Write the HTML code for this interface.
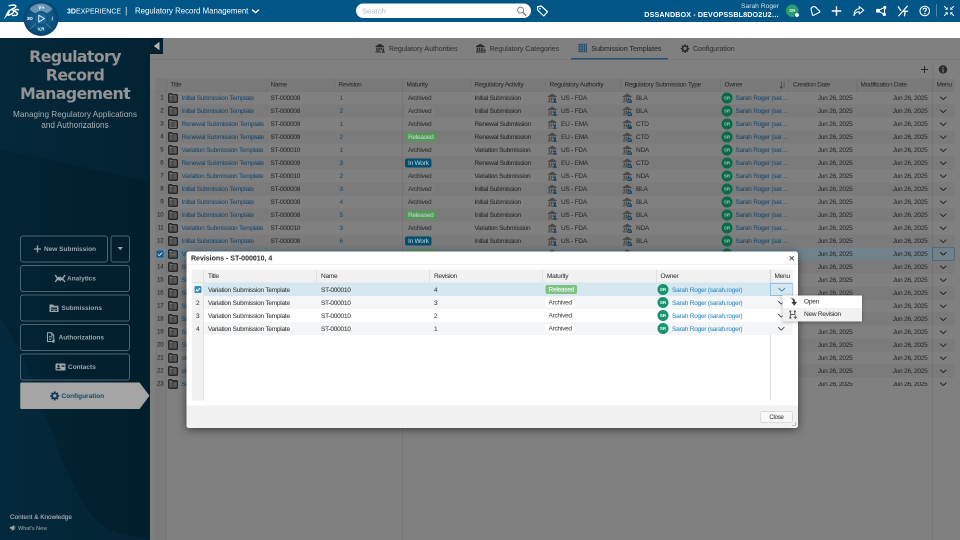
<!DOCTYPE html>
<html lang="en"><head><meta charset="utf-8"><title>Regulatory Record Management</title>
<style>
html,body{margin:0;padding:0}
body{width:960px;height:540px;overflow:hidden;background:#fff}
#root{position:relative;width:1920px;height:1080px;transform:scale(.5);transform-origin:0 0;will-change:transform;filter:blur(.55px);font-family:"Liberation Sans",Arial,sans-serif;color:#2a2a2a;overflow:hidden}
#root svg{position:absolute;display:block}
#topbar{position:absolute;left:0;top:0;width:1920px;height:44px;background:#005686}
#topbar .t{position:absolute;white-space:nowrap;color:#fff}
#strip{position:absolute;left:0;top:44px;width:1920px;height:32px;background:#fff}
/* sidebar */
#side{position:absolute;left:0;top:76px;width:300px;height:1004px;background:#02212f;overflow:hidden}
#side .ttl{position:absolute;left:0;top:19px;width:300px;text-align:center;font:bold 31.800px/36.800px "DejaVu Sans","Liberation Sans",sans-serif;color:#939393;letter-spacing:-1.400px}
#side .sub{position:absolute;left:0;top:142px;width:300px;text-align:center;font:16.400px/20.600px "Liberation Sans",sans-serif;color:#a9afb3}
#side .btn{position:absolute;left:40px;width:216px;height:50px;border:2px solid #4c6472;border-radius:6px;color:#9ea7ad;font:bold 13px "Liberation Sans",sans-serif}
#side .btn span{position:absolute;top:17px;white-space:nowrap}
#side .foot{position:absolute;white-space:nowrap;color:#a4abb0}
/* main */
#main{z-index:0;position:absolute;left:300px;top:76px;width:1620px;height:1004px;background:#808080;overflow:hidden}
.collapse{position:absolute;left:0;top:0;width:26px;height:32px;background:#02212f}
.collapse svg{left:0;top:0;width:26px;height:32px}
.tabs{position:absolute;left:0;top:0;width:1620px;height:44px}
.tab{position:absolute;top:0;height:42px;font-size:14px;color:#383838;white-space:nowrap;-webkit-text-stroke:.15px}
.tab span{position:absolute;top:13px}
.tab .ti{top:8.500px;width:21px;height:21px}
.tabline{position:absolute;left:0;top:42px;width:1620px;height:2px;background:#767676}
.tabul{position:absolute;left:842px;top:40px;width:194px;height:3px;background:#1f5578}
.grid{position:absolute;left:10px;top:0;width:1599px;height:1004px}
.numcol{position:absolute;left:0;top:81px;width:23px;height:923px;background:#7b7b7b}
.vl{position:absolute;top:81px;width:1px;height:923px;background:#6c6c6c;z-index:3}
.hdr{position:absolute;left:0;top:81px;width:1599px;height:25px;background:#7a7a7a;border-bottom:1px solid #6e6e6e}
.h{position:absolute;top:0;height:25px;box-sizing:border-box;border-right:1px solid #6c6c6c;font-size:13px;letter-spacing:-.47px;-webkit-text-stroke:.12px;line-height:24px;padding-left:8px;color:#2e2e2e;white-space:nowrap}
.row{position:absolute;left:0;width:1599px;height:26px;font-size:13px;letter-spacing:-.47px;line-height:25px;-webkit-text-stroke:.12px}
.row.alt{background:#7b7b7b}
.row.sel{background:#71828d}
.c{position:absolute;top:0;height:26px;white-space:nowrap;overflow:hidden}
.c .tx{position:absolute;left:8px;top:0;color:#2b2b2b}
.c.r .tx{left:auto;right:8px}
.c .lnk{position:absolute;top:0;color:#1c4b70;text-decoration:none}
.c.num{left:0;width:17px;text-align:right;padding-right:6px;color:#2b2b2b;font-size:12.500px}
.ic-tpl{left:3px;top:3px;width:20px;height:20px}
.ic-bld{left:3px;top:2px;width:21px;height:21px}
.av{position:absolute;left:2px;top:2px;width:22px;height:22px;border-radius:50%;background:#0b6849;color:#9fc9b8;font:bold 9px/22px "Liberation Sans",sans-serif;letter-spacing:0;-webkit-text-stroke:0;text-align:center}
.chev{left:14px;top:8.500px;width:15px;height:9px}
.bdg{position:absolute;left:5px;top:4px;height:18px;line-height:18px;padding:0 6px;border-radius:4px;font-size:13px}
.b-arch{color:#303030;background:#808080}
.b-rel{background:#54965a;color:#c3d8c4}
.b-work{background:#044f6c;color:#b5cbd6}
.cb{position:absolute;left:3px;top:6px;width:14px;height:14px;background:#1a5d8c;border-radius:2px}
.cb svg{left:0;top:0;width:14px;height:14px}
.c.mn{overflow:visible}
.row.sel .c.mn{box-sizing:border-box;border:1.500px solid #2a597c;background:#71828d}
.row.sel .c.mn .chev{left:12.500px;top:7px}
/* dialog */
#dlg{z-index:10;position:absolute;left:373px;top:503px;width:1223px;height:353px;background:#fff;border-radius:5px;box-shadow:0 3px 18px rgba(0,0,0,.55);font-size:13px;letter-spacing:-.47px;-webkit-text-stroke:.12px;color:#3d3d3d}
#dlg .dt{position:absolute;left:9px;top:4px;font:bold 14px/18px "Liberation Sans",sans-serif;color:#2a2a2a;white-space:nowrap;letter-spacing:0;-webkit-text-stroke:0}
#dlg .dh{position:absolute;left:0;top:25px;width:1223px;height:1px;background:#e2e4e3}
#dlg .gh{position:absolute;left:11px;top:36px;width:1201px;height:25px;background:#f1f1f1;border-bottom:1px solid #d1d4d4}
#dlg .gh div{position:absolute;top:0;height:25px;line-height:25px;box-sizing:border-box;border-right:1px solid #d1d4d4;padding-left:8px;white-space:nowrap;color:#3d3d3d}
#dlg .gn{position:absolute;left:11px;top:62px;width:24px;height:236px;background:#f1f1f1;border-right:1px solid #d1d4d4;box-sizing:border-box}
#dlg .gv{position:absolute;left:1167px;top:36px;width:1px;height:262px;background:#b4b6ba}
#dlg .dr{position:absolute;left:11px;width:1201px;height:26px;line-height:27px}
#dlg .dr .d{position:absolute;top:0;height:26px;white-space:nowrap}
#dlg .dr a{color:#368ec4;text-decoration:none}
#dlg .df{position:absolute;left:0;top:308px;width:1223px;height:45px;background:#f1f1f1;border-radius:0 0 5px 5px}
#dlg .close{position:absolute;left:1148px;top:320px;width:62px;height:20px;border:1px solid #c4c6c8;border-radius:3px;background:#f7f7f7;text-align:center;line-height:20px;font-size:12px;color:#3d3d3d}
#dlg .bdg{top:4px}
#dlg .b-arch{background:#fff;color:#4d4d4d}
#dlg .b-rel{background:#7fc282;color:#fff}
#dlg .av{background:#17946a;color:#fff}
#ctx{z-index:11;position:absolute;left:1565px;top:591px;width:159px;height:52px;background:#fff;box-shadow:0 1px 6px rgba(0,0,0,.35);font-size:13px;letter-spacing:-.47px;-webkit-text-stroke:.12px;color:#3d3d3d}
#ctx div{position:absolute;left:0;width:159px;height:25px;line-height:23px}
#ctx span{position:absolute;left:43px;white-space:nowrap}

</style></head>
<body>
<div id="root">
<div id="topbar">
 <svg viewBox="0 0 32 32" style="left:7px;top:8px;width:32px;height:32px"><g fill="none" stroke="#fff" stroke-linecap="round" stroke-linejoin="round"><path d="M11.500 3.400C15.500 2.200 21 1.600 23.300 2.600c2.200 1 1.400 3.600-1.300 5.300-1.400.9-3 1.600-5 2.100" stroke-width="3"/><path d="M14.500 11.600c4-.4 6.500 1 6 3.600-.6 3-5.500 5.600-11.500 7.300" stroke-width="3"/><path d="M30 11.300c-3.300-.5-6.300-.3-7.400.9-1.200 1.400.2 2.600 2.200 3.700 2.500 1.400 3.800 2.800 2.700 4.800-1.200 2-5 2.600-9.500 2.200" stroke-width="3"/></g><path d="M10 11.800 15 11 10.500 20.500 0.500 30.500l5-10.500z" fill="#fff"/></svg>
 <span class="t" style="left:134px;top:14px;font-size:14px;line-height:16px"><b>3D</b>EXPERIENCE</span>
 <span class="t" style="left:250px;top:10px;font-size:19px;line-height:22px;color:#d5e2ea;font-weight:100">|</span>
 <span class="t" style="left:270px;top:12px;font-size:15.700px;line-height:19px">Regulatory Record Management</span>
 <svg viewBox="0 0 16 10" style="left:503px;top:18px;width:16px;height:10px"><path d="M2 2l6 5.500L14 2" fill="none" stroke="#fff" stroke-width="2.800" stroke-linecap="round" stroke-linejoin="round"/></svg>
 <div style="position:absolute;left:712px;top:7px;width:350px;height:29px;border-radius:15px;background:#fff"></div>
 <span class="t" style="left:724px;top:14px;font-size:15px;line-height:16px;color:#b6babd">Search</span>
 <svg viewBox="0 0 24 24" style="left:1032px;top:11px;width:22px;height:22px"><circle cx="10" cy="10" r="6.500" fill="none" stroke="#777" stroke-width="2"/><path d="M15 15l6.500 6.500" stroke="#6a6a6a" stroke-width="2.600" stroke-linecap="round"/></svg>
 <svg viewBox="0 0 26 26" style="left:1072px;top:9px;width:26px;height:26px"><path d="M3 4.500 10.500 3 23 14.500 15.500 23 3.500 11.500z" fill="none" stroke="#fff" stroke-width="2.400" stroke-linejoin="round"/><circle cx="8" cy="8.500" r="1.600" fill="#fff"/></svg>
 <span class="t" style="right:362px;top:4px;font-size:13.400px;line-height:16px;color:#d3e1ea">Sarah Roger</span>
 <span class="t" style="right:362px;top:21px;font:bold 14.300px/17px 'Liberation Sans',sans-serif;letter-spacing:.26px">DSSANDBOX - DEVOPSSBL8DO2U2…</span>
 <div style="position:absolute;left:1572px;top:9px;width:25px;height:25px;border-radius:50%;background:#2a9d6e;color:#d8f0e6;font:bold 9px/25px 'Liberation Sans',sans-serif;text-align:center">SR</div>
 <div style="position:absolute;left:1589px;top:25px;width:8px;height:8px;border-radius:50%;background:#fff;border:1.500px solid #005686"></div>
 <!-- notification -->
 <svg viewBox="0 0 24 24" style="left:1618px;top:10px;width:24px;height:24px"><path d="M4.300 9.500C3.500 5.500 7 2.600 10.800 3.300c2.600.5 4.400 2.300 5.700 4.700l4.800 4.200c.9.900.6 2-.5 2.500L9.300 20.600c-1.200.6-2.300 0-2.500-1.300z" fill="none" stroke="#fff" stroke-width="2.300" stroke-linejoin="round"/></svg>
 <svg viewBox="0 0 24 24" style="left:1661px;top:10px;width:24px;height:24px"><path d="M12 2.500v19M2.500 12h19" stroke="#fff" stroke-width="2.800"/></svg>
 <svg viewBox="0 0 24 24" style="left:1705px;top:10px;width:24px;height:24px"><path d="M13.500 3 22.500 10.500l-9 7.500v-4.500C8.500 13.500 5 15.500 3 21 3 13 7 8 13.500 7.500z" fill="none" stroke="#fff" stroke-width="2.200" stroke-linejoin="round"/></svg>
 <svg viewBox="0 0 24 24" style="left:1751px;top:10px;width:24px;height:24px"><path d="M4.500 11.500 18.500 4.500 17.800 19z" fill="none" stroke="#fff" stroke-width="2.200"/><circle cx="4.800" cy="11.600" r="4" fill="#fff"/><circle cx="18.600" cy="4.800" r="3" fill="#fff"/><circle cx="17.800" cy="19" r="3.300" fill="#fff"/></svg>
 <svg viewBox="0 0 24 24" style="left:1794px;top:10px;width:24px;height:24px"><path d="M2.500 3.500 7.500 11M20.500 2.500 3.500 21.500M12.500 12.500h9M16.500 12.500 15 21.500" fill="none" stroke="#fff" stroke-width="2.600" stroke-linecap="round"/></svg>
 <svg viewBox="0 0 24 24" style="left:1837px;top:10px;width:24px;height:24px"><circle cx="12.500" cy="12" r="9.500" fill="none" stroke="#fff" stroke-width="2.200"/><path d="M9.200 9.500c0-2 1.400-3.200 3.300-3.200s3.200 1.200 3.200 2.900c0 2.300-3.100 2.500-3.100 4.800" fill="none" stroke="#fff" stroke-width="2.300"/><circle cx="12.600" cy="17.300" r="1.500" fill="#fff"/></svg>
 <div style="position:absolute;left:1872px;top:8px;width:2px;height:25px;background:#4886ab"></div>
 <svg viewBox="0 0 24 24" style="left:1886px;top:10px;width:24px;height:24px"><g fill="#fff" stroke="#fff" stroke-width="2" stroke-linecap="round"><path d="M3 3l5 5M21 3l-5 5M3 21l5-5M21 21l-5-5" fill="none"/><path d="M9.500 4v5.500H4zM14.500 4v5.500H20zM9.500 20v-5.500H4zM14.500 20v-5.500H20z" stroke="none"/></g></svg>
</div>
<div id="strip"></div>
<svg id="compass" viewBox="0 0 72 72" style="left:46px;top:1px;width:72px;height:72px;z-index:5">
 <defs><radialGradient id="cg" cx=".5" cy=".45" r=".55"><stop offset="0" stop-color="#1c6a9b"/><stop offset=".7" stop-color="#0d5482"/><stop offset="1" stop-color="#094772"/></radialGradient></defs>
 <circle cx="36" cy="36" r="35" fill="#0a4670"/>
 <circle cx="36" cy="36" r="31.500" fill="url(#cg)"/>
 <path d="M13.0 16.7A30 30 0 0 1 59.0 16.7Q54.0 23.6 46.1 25.6A14.500 14.500 0 0 0 25.9 25.6Q18.0 23.6 13.0 16.7z" fill="#7fa6c2" opacity=".78"/>
 <path d="M15 57 26.100 45.900M57 57 45.900 45.900" stroke="#5f95b8" stroke-width="1.200"/>
 <circle cx="36" cy="36" r="13" fill="#17649a" stroke="#0b4a76" stroke-width="1.800"/>
 <path d="M31.500 29.500v13.500l11.500-6.800z" fill="none" stroke="#d3e3ef" stroke-width="2.100" stroke-linejoin="round"/>
 <text x="36.500" y="17.500" font-family="Liberation Sans,sans-serif" font-size="10" font-weight="bold" fill="#fff" text-anchor="middle" font-style="italic">V+</text>
 <text x="13.500" y="39" font-family="Liberation Sans,sans-serif" font-size="9.500" font-weight="bold" fill="#fff" text-anchor="middle">3D</text>
 <text x="58.500" y="39.500" font-family="Liberation Sans,sans-serif" font-size="10" font-weight="bold" fill="#fff" text-anchor="middle" font-style="italic">i</text>
 <text x="36" y="59.500" font-family="Liberation Sans,sans-serif" font-size="9" font-weight="bold" fill="#fff" text-anchor="middle">V,R</text>
</svg>

<div id="side">
 <svg viewBox="0 0 300 1004" style="left:0;top:0;width:300px;height:1004px"><defs><linearGradient id="sg" x1="0" y1="0" x2="1" y2="0"><stop offset="0" stop-color="#032536"/><stop offset=".5" stop-color="#022130"/><stop offset="1" stop-color="#011e2c"/></linearGradient></defs><rect width="300" height="1004" fill="url(#sg)"/><path d="M0 0H300V288L0 222z" fill="#0a3349" opacity=".28"/><path d="M0 560C60 640 100 800 150 900S240 990 300 1000V1004H0z" fill="#0b364c" opacity=".3"/></svg>
 <div class="ttl">Regulatory<br>Record<br>Management</div>
 <div class="sub">Managing Regulatory Applications<br>and Authorizations</div>
 <div class="btn" style="top:395px;width:172px">
  <svg viewBox="0 0 16 16" style="left:25px;top:17px;width:16px;height:16px"><path d="M8 1v14M1 8h14" stroke="#9ea7ad" stroke-width="2.600"/></svg>
  <span style="left:46px">New Submission</span></div>
 <div class="btn" style="top:395px;left:221px;width:35px"><svg viewBox="0 0 12 8" style="left:12px;top:21px;width:11px;height:7px"><path d="M0 0h12L6 7.500z" fill="#9ea7ad"/></svg></div>
 <div class="btn" style="top:454px">
  <svg viewBox="0 0 22 18" style="left:67px;top:16px;width:22px;height:18px"><path d="M1.500 2 7.500 11.500l4-5 3.500 4.500 6-9M1.500 16 7.500 7l4 5.500 3.500-4 6 7.500" fill="none" stroke="#9ea7ad" stroke-width="2.700"/></svg>
  <span style="left:92px">Analytics</span></div>
 <div class="btn" style="top:513px">
  <svg viewBox="0 0 20 18" style="left:56px;top:16px;width:20px;height:18px"><path d="M1 2h7l2 2.500h9V17H1z" fill="#9ea7ad"/><path d="M4 8h12v2.500H4zM4 12h12v3H4z" fill="#02212f"/><path d="M7 12.800h6v1.400H7z" fill="#9ea7ad"/></svg>
  <span style="left:81px">Submissions</span></div>
 <div class="btn" style="top:572px">
  <svg viewBox="0 0 18 22" style="left:51px;top:14px;width:18px;height:22px"><path d="M2 1.500h8l4.500 4.500v13H2z" fill="none" stroke="#9ea7ad" stroke-width="2"/><path d="M9.500 2v4.500H14M5 9h6.500M5 12h6.500M5 15h4" fill="none" stroke="#9ea7ad" stroke-width="1.600"/><circle cx="14" cy="17.500" r="2.500" fill="#9ea7ad"/><path d="M12.500 19.500 12 22l2-1 2 1-.5-2.500" fill="#9ea7ad"/></svg>
  <span style="left:75px">Authorizations</span></div>
 <div class="btn" style="top:631px">
  <svg viewBox="0 0 22 16" style="left:68px;top:17px;width:22px;height:16px"><rect x="1" y="1" width="20" height="14" rx="1.500" fill="#9ea7ad"/><circle cx="7" cy="6" r="2.300" fill="#02212f"/><path d="M3 12.500c0-2.500 1.800-3.500 4-3.500s4 1 4 3.500z" fill="#02212f"/><path d="M13 5h6v2.500h-6z" fill="#02212f"/></svg>
  <span style="left:94px">Contacts</span></div>
 <svg viewBox="0 0 260 56" style="left:40px;top:688px;width:260px;height:56px"><path d="M3 1h236l20 26.500L239 54H3a2.500 2.500 0 0 1-2.500-2.500v-48A2.500 2.500 0 0 1 3 1z" fill="#a5a5a5"/></svg>
 <svg viewBox="0 0 24 24" style="left:100px;top:706px;width:19px;height:19px"><path fill="#0d3a5a" fill-rule="evenodd" d="M10.200 1h3.600l.5 3a8 8 0 0 1 2.100.9l2.500-1.800 2.500 2.500-1.800 2.500a8 8 0 0 1 .9 2.100l3 .5v3.600l-3 .5a8 8 0 0 1-.9 2.100l1.800 2.500-2.500 2.500-2.500-1.800a8 8 0 0 1-2.100.9l-.5 3h-3.600l-.5-3a8 8 0 0 1-2.100-.9l-2.500 1.800-2.500-2.500 1.800-2.500a8 8 0 0 1-.9-2.100l-3-.5v-3.600l3-.5a8 8 0 0 1 .9-2.100L2.600 5.600l2.500-2.500 2.500 1.800a8 8 0 0 1 2.100-.9zM12 7.800a4.200 4.200 0 1 0 0 8.400 4.200 4.200 0 0 0 0-8.400z"/></svg>
 <span class="foot" style="left:123px;top:708px;font:bold 13px/16px 'Liberation Sans',sans-serif;color:#16486b">Configuration</span>
 <span class="foot" style="left:20px;top:950px;font-size:12.800px;line-height:16px;color:#b0b7bc;-webkit-text-stroke:.2px">Content &amp; Knowledge</span>
 <svg viewBox="0 0 14 12" style="left:19px;top:974px;width:13px;height:11px"><path d="M1 4.500h3L10 1v9.500L4 7.500H1zM4.500 8l1 3.500h2L6.500 8.500M11 3.500l2-1M11 6h2.500M11 8l2 1" fill="#a4abb0" stroke="#a4abb0" stroke-width=".8"/></svg>
 <span class="foot" style="left:36px;top:973px;font-size:11px;line-height:14px">What's New</span>
</div>

<div id="main">
<div class="collapse"><svg viewBox="0 0 26 32"><path d="M19 7.500v17L7.500 16z" fill="#b4b4b4"/></svg></div>
<div class="tabs">
 <div class="tab" style="left:450px">
  <svg class="ti" viewBox="0 0 22 22" style="left:0"><path d="M1 7.500 10 2.500l9 5V9.300H1z" fill="#2c2c2c"/><path d="M2.500 10.500h3v7h-3zM7 10.500h3v7H7zM11.500 10.500h3v5h-3zM1 18.500h12V21H1z" fill="#2c2c2c"/><path d="M16 10.500h2.500V13H16z" fill="#2c2c2c"/><circle cx="17.300" cy="15.800" r="2.200" fill="#2c2c2c"/><path d="M13.800 21.500c0-2.400 1.500-3.400 3.500-3.400s3.500 1 3.500 3.400z" fill="#2c2c2c"/></svg>
  <span style="left:28px">Regulatory Authorities</span></div>
 <div class="tab" style="left:651px">
  <svg class="ti" viewBox="0 0 22 22" style="left:0"><path d="M1 7.500 10 2.500l9 5V9.300H1z" fill="#2c2c2c"/><path d="M2.500 10.500h3v7h-3zM7 10.500h3v7H7zM11.500 10.500h3v3h-3zM16 10.500h2.500v2H16zM1 18.500h9V21H1z" fill="#2c2c2c"/><path d="M11 14.500h4.500v3H11zM16.500 14.500H21v3h-4.500zM11 18.500h4.500v3H11zM16.500 18.500H21v3h-4.500z" fill="#2c2c2c"/></svg>
  <span style="left:28px">Regulatory Categories</span></div>
 <div class="tab act" style="left:855px">
  <svg class="ti" viewBox="0 0 22 22" style="left:1px;top:10px;width:19px;height:20px"><path d="M2.500 1v20M6.800 1v20M11 1v20M15.200 1v20M19.500 1v20" stroke="#1d4868" stroke-width="2.100"/><path d="M1.500 3h19M1.500 8.300h19M1.500 13.700h19M1.500 19h19" stroke="#1d4868" stroke-width="1.300" opacity=".75"/></svg>
  <span style="left:28px;color:#2b2b2b">Submission Templates</span></div>
 <div class="tab" style="left:1060px">
  <svg class="ti" viewBox="0 0 24 24" style="left:1px;top:11.500px;width:18px;height:18px"><path fill="#2e2e2e" fill-rule="evenodd" d="M10.200 1h3.600l.5 3a8 8 0 0 1 2.100.9l2.500-1.800 2.500 2.500-1.800 2.500a8 8 0 0 1 .9 2.100l3 .5v3.600l-3 .5a8 8 0 0 1-.9 2.100l1.800 2.500-2.500 2.500-2.500-1.800a8 8 0 0 1-2.100.9l-.5 3h-3.600l-.5-3a8 8 0 0 1-2.100-.9l-2.500 1.800-2.500-2.500 1.800-2.500a8 8 0 0 1-.9-2.100l-3-.5v-3.600l3-.5a8 8 0 0 1 .9-2.100L2.600 5.600l2.500-2.500 2.500 1.800a8 8 0 0 1 2.100-.9zM12 7.800a4.200 4.200 0 1 0 0 8.400 4.200 4.200 0 0 0 0-8.400z"/></svg>
  <span style="left:26px">Configuration</span></div>
 <div class="tabline"></div>
 <div class="tabul"></div>
</div>
<div class="tool">
 <svg viewBox="0 0 20 20" style="left:1539px;top:53px;width:20px;height:20px"><path d="M10 3v14M3 10h14" stroke="#2a2a2a" stroke-width="2"/></svg>
 <div style="position:absolute;left:1565px;top:49px;width:2px;height:28px;background:#757575"></div>
 <svg viewBox="0 0 20 20" style="left:1576px;top:53px;width:20px;height:20px"><circle cx="10" cy="10" r="8.500" fill="#2a2a2a"/><path d="M8.200 8.600h2.900v5.600h1.100v1.300H8v-1.300h1.200v-4.300h-1zM8.900 4.700h2.200v2.200H8.900z" fill="#858585"/></svg>
</div>
<div class="grid">
 <div class="numcol"></div>
 <div class="vl" style="left:22px"></div>
 <div class="vl" style="left:494px"></div>
 <div class="vl" style="left:1554px"></div>
 <div class="hdr">
  <div class="h" style="left:0;width:23px"></div>
  <div class="h" style="left:23px;width:200px">Title</div>
  <div class="h" style="left:223px;width:136px">Name</div>
  <div class="h" style="left:359px;width:136px">Revision</div>
  <div class="h" style="left:495px;width:136px">Maturity</div>
  <div class="h" style="left:631px;width:150px">Regulatory Activity</div>
  <div class="h" style="left:781px;width:150px">Regulatory Authority</div>
  <div class="h" style="left:931px;width:200px">Regulatory Submission Type</div>
  <div class="h" style="left:1131px;width:137px">Owner<svg viewBox="0 0 12 16" style="position:absolute;right:6px;top:5px;width:12px;height:16px"><path d="M3.500 1v13M1 11.500 3.500 14.500 6 11.500" stroke="#333" stroke-width="1.300" fill="none"/><path d="M8 2h3M8 5h3M8 8.500h3M8 12h3" stroke="#333" stroke-width="1.200"/></svg></div>
  <div class="h" style="left:1268px;width:135px">Creation Date</div>
  <div class="h" style="left:1403px;width:152px">Modification Date</div>
  <div class="h" style="left:1555px;width:44px;border-right:0">Menu</div>
 </div>
<div class="row" style="top:107px">
<div class="c num">1</div>
<div class="c" style="left:23px;width:200px"><svg class="ic-tpl" viewBox="0 0 20 20"><path d="M1.600 5V3.200c0-1 .6-1.600 1.600-1.600h3.600l1.600 1.900h8.400c1 0 1.600.6 1.600 1.600v11.700c0 1-.6 1.600-1.600 1.600H3.200c-1 0-1.600-.6-1.600-1.600z" fill="none" stroke="#1c1c1c" stroke-width="2.700"/><path d="M5.800 6.800h8.400v8.800H5.800z" fill="#8a8a8a" stroke="#2c2c2c" stroke-width="1.300"/><path d="M7.200 9.300h5.600M7.200 11.400h5.600M7.200 13.500h5.600" stroke="#222" stroke-width="1.300" fill="none"/></svg><a class="lnk" style="left:30px">Initial Submission Template</a></div>
<div class="c" style="left:223px;width:136px"><span class="tx">ST-000008</span></div>
<div class="c" style="left:359px;width:136px"><a class="lnk" style="left:10px">1</a></div>
<div class="c" style="left:495px;width:136px"><span class="bdg b-arch">Archived</span></div>
<div class="c" style="left:631px;width:150px"><span class="tx">Initial Submission</span></div>
<div class="c" style="left:781px;width:150px"><svg class="ic-bld" viewBox="0 0 22 22"><path d="M1.500 8 11 2l9.500 6v1.500h-19z" fill="#4a4a4a"/><path d="M3.500 10.500h2.600v7H3.500zM7.800 10.500h2.600v7H7.800zM12 10.500h2.600v5H12zM16.200 10.500h2.400v3.500h-2.400zM1.500 18.500h11v2.300h-11z" fill="#4a4a4a"/><circle cx="16.500" cy="15.300" r="2.300" fill="#0f3d5e"/><path d="M12.500 21.500c0-2.600 1.700-3.800 4-3.800s4 1.200 4 3.800z" fill="#0f3d5e"/></svg><span class="tx" style="left:31px">US - FDA</span></div>
<div class="c" style="left:931px;width:200px"><svg class="ic-bld" viewBox="0 0 22 22"><path d="M1.500 8 11 2l9.500 6v1.500h-19z" fill="#4a4a4a"/><path d="M3.500 10.500h2.600v7H3.500zM7.800 10.500h2.600v7H7.800zM12 10.500h2.600v3H12zM16.200 10.500h2.400v2h-2.400zM1.500 18.500h9v2.300h-9z" fill="#4a4a4a"/><path d="M11.500 14h6.200l3 3v4.700h-9.200z" fill="#0f3d5e"/><path d="M13.200 17.200h4.500M13.200 19.300h5.500" stroke="#8a9aa6" stroke-width="1"/></svg><span class="tx" style="left:31px">BLA</span></div>
<div class="c" style="left:1131px;width:137px"><span class="av">SR</span><a class="lnk" style="left:30px">Sarah Roger (sar…</a></div>
<div class="c r" style="left:1268px;width:135px"><span class="tx">Jun 26, 2025</span></div>
<div class="c r" style="left:1403px;width:152px"><span class="tx" style="right:10px">Jun 26, 2025</span></div>
<div class="c mn" style="left:1555px;width:44px"><svg class="chev" viewBox="0 0 20 12"><path d="M2.500 2.500 10 9.500l7.500-7" fill="none" stroke="#222" stroke-width="2.700" stroke-linecap="round" stroke-linejoin="round"/></svg></div>
</div>
<div class="row alt" style="top:133px">
<div class="c num">2</div>
<div class="c" style="left:23px;width:200px"><svg class="ic-tpl" viewBox="0 0 20 20"><path d="M1.600 5V3.200c0-1 .6-1.600 1.600-1.600h3.600l1.600 1.900h8.400c1 0 1.600.6 1.600 1.600v11.700c0 1-.6 1.600-1.600 1.600H3.200c-1 0-1.600-.6-1.600-1.600z" fill="none" stroke="#1c1c1c" stroke-width="2.700"/><path d="M5.800 6.800h8.400v8.800H5.800z" fill="#8a8a8a" stroke="#2c2c2c" stroke-width="1.300"/><path d="M7.200 9.300h5.600M7.200 11.400h5.600M7.200 13.500h5.600" stroke="#222" stroke-width="1.300" fill="none"/></svg><a class="lnk" style="left:30px">Initial Submission Template</a></div>
<div class="c" style="left:223px;width:136px"><span class="tx">ST-000008</span></div>
<div class="c" style="left:359px;width:136px"><a class="lnk" style="left:10px">2</a></div>
<div class="c" style="left:495px;width:136px"><span class="bdg b-arch">Archived</span></div>
<div class="c" style="left:631px;width:150px"><span class="tx">Initial Submission</span></div>
<div class="c" style="left:781px;width:150px"><svg class="ic-bld" viewBox="0 0 22 22"><path d="M1.500 8 11 2l9.500 6v1.500h-19z" fill="#4a4a4a"/><path d="M3.500 10.500h2.600v7H3.500zM7.800 10.500h2.600v7H7.800zM12 10.500h2.600v5H12zM16.200 10.500h2.400v3.500h-2.400zM1.500 18.500h11v2.300h-11z" fill="#4a4a4a"/><circle cx="16.500" cy="15.300" r="2.300" fill="#0f3d5e"/><path d="M12.500 21.500c0-2.600 1.700-3.800 4-3.800s4 1.200 4 3.800z" fill="#0f3d5e"/></svg><span class="tx" style="left:31px">US - FDA</span></div>
<div class="c" style="left:931px;width:200px"><svg class="ic-bld" viewBox="0 0 22 22"><path d="M1.500 8 11 2l9.500 6v1.500h-19z" fill="#4a4a4a"/><path d="M3.500 10.500h2.600v7H3.500zM7.800 10.500h2.600v7H7.800zM12 10.500h2.600v3H12zM16.200 10.500h2.400v2h-2.400zM1.500 18.500h9v2.300h-9z" fill="#4a4a4a"/><path d="M11.500 14h6.200l3 3v4.700h-9.200z" fill="#0f3d5e"/><path d="M13.200 17.200h4.500M13.200 19.300h5.500" stroke="#8a9aa6" stroke-width="1"/></svg><span class="tx" style="left:31px">BLA</span></div>
<div class="c" style="left:1131px;width:137px"><span class="av">SR</span><a class="lnk" style="left:30px">Sarah Roger (sar…</a></div>
<div class="c r" style="left:1268px;width:135px"><span class="tx">Jun 26, 2025</span></div>
<div class="c r" style="left:1403px;width:152px"><span class="tx" style="right:10px">Jun 26, 2025</span></div>
<div class="c mn" style="left:1555px;width:44px"><svg class="chev" viewBox="0 0 20 12"><path d="M2.500 2.500 10 9.500l7.500-7" fill="none" stroke="#222" stroke-width="2.700" stroke-linecap="round" stroke-linejoin="round"/></svg></div>
</div>
<div class="row" style="top:159px">
<div class="c num">3</div>
<div class="c" style="left:23px;width:200px"><svg class="ic-tpl" viewBox="0 0 20 20"><path d="M1.600 5V3.200c0-1 .6-1.600 1.600-1.600h3.600l1.600 1.900h8.400c1 0 1.600.6 1.600 1.600v11.700c0 1-.6 1.600-1.600 1.600H3.200c-1 0-1.600-.6-1.600-1.600z" fill="none" stroke="#1c1c1c" stroke-width="2.700"/><path d="M5.800 6.800h8.400v8.800H5.800z" fill="#8a8a8a" stroke="#2c2c2c" stroke-width="1.300"/><path d="M7.200 9.300h5.600M7.200 11.400h5.600M7.200 13.500h5.600" stroke="#222" stroke-width="1.300" fill="none"/></svg><a class="lnk" style="left:30px">Renewal Submission Template</a></div>
<div class="c" style="left:223px;width:136px"><span class="tx">ST-000009</span></div>
<div class="c" style="left:359px;width:136px"><a class="lnk" style="left:10px">1</a></div>
<div class="c" style="left:495px;width:136px"><span class="bdg b-arch">Archived</span></div>
<div class="c" style="left:631px;width:150px"><span class="tx">Renewal Submission</span></div>
<div class="c" style="left:781px;width:150px"><svg class="ic-bld" viewBox="0 0 22 22"><path d="M1.500 8 11 2l9.500 6v1.500h-19z" fill="#4a4a4a"/><path d="M3.500 10.500h2.600v7H3.500zM7.800 10.500h2.600v7H7.800zM12 10.500h2.600v5H12zM16.200 10.500h2.400v3.500h-2.400zM1.500 18.500h11v2.300h-11z" fill="#4a4a4a"/><circle cx="16.500" cy="15.300" r="2.300" fill="#0f3d5e"/><path d="M12.500 21.500c0-2.600 1.700-3.800 4-3.800s4 1.200 4 3.800z" fill="#0f3d5e"/></svg><span class="tx" style="left:31px">EU - EMA</span></div>
<div class="c" style="left:931px;width:200px"><svg class="ic-bld" viewBox="0 0 22 22"><path d="M1.500 8 11 2l9.500 6v1.500h-19z" fill="#4a4a4a"/><path d="M3.500 10.500h2.600v7H3.500zM7.800 10.500h2.600v7H7.800zM12 10.500h2.600v3H12zM16.200 10.500h2.400v2h-2.400zM1.500 18.500h9v2.300h-9z" fill="#4a4a4a"/><path d="M11.500 14h6.200l3 3v4.700h-9.200z" fill="#0f3d5e"/><path d="M13.200 17.200h4.500M13.200 19.300h5.500" stroke="#8a9aa6" stroke-width="1"/></svg><span class="tx" style="left:31px">CTD</span></div>
<div class="c" style="left:1131px;width:137px"><span class="av">SR</span><a class="lnk" style="left:30px">Sarah Roger (sar…</a></div>
<div class="c r" style="left:1268px;width:135px"><span class="tx">Jun 26, 2025</span></div>
<div class="c r" style="left:1403px;width:152px"><span class="tx" style="right:10px">Jun 26, 2025</span></div>
<div class="c mn" style="left:1555px;width:44px"><svg class="chev" viewBox="0 0 20 12"><path d="M2.500 2.500 10 9.500l7.500-7" fill="none" stroke="#222" stroke-width="2.700" stroke-linecap="round" stroke-linejoin="round"/></svg></div>
</div>
<div class="row alt" style="top:185px">
<div class="c num">4</div>
<div class="c" style="left:23px;width:200px"><svg class="ic-tpl" viewBox="0 0 20 20"><path d="M1.600 5V3.200c0-1 .6-1.600 1.600-1.600h3.600l1.600 1.900h8.400c1 0 1.600.6 1.600 1.600v11.700c0 1-.6 1.600-1.600 1.600H3.200c-1 0-1.600-.6-1.600-1.600z" fill="none" stroke="#1c1c1c" stroke-width="2.700"/><path d="M5.800 6.800h8.400v8.800H5.800z" fill="#8a8a8a" stroke="#2c2c2c" stroke-width="1.300"/><path d="M7.200 9.300h5.600M7.200 11.400h5.600M7.200 13.500h5.600" stroke="#222" stroke-width="1.300" fill="none"/></svg><a class="lnk" style="left:30px">Renewal Submission Template</a></div>
<div class="c" style="left:223px;width:136px"><span class="tx">ST-000009</span></div>
<div class="c" style="left:359px;width:136px"><a class="lnk" style="left:10px">2</a></div>
<div class="c" style="left:495px;width:136px"><span class="bdg b-rel">Released</span></div>
<div class="c" style="left:631px;width:150px"><span class="tx">Renewal Submission</span></div>
<div class="c" style="left:781px;width:150px"><svg class="ic-bld" viewBox="0 0 22 22"><path d="M1.500 8 11 2l9.500 6v1.500h-19z" fill="#4a4a4a"/><path d="M3.500 10.500h2.600v7H3.500zM7.800 10.500h2.600v7H7.800zM12 10.500h2.600v5H12zM16.200 10.500h2.400v3.500h-2.400zM1.500 18.500h11v2.300h-11z" fill="#4a4a4a"/><circle cx="16.500" cy="15.300" r="2.300" fill="#0f3d5e"/><path d="M12.500 21.500c0-2.600 1.700-3.800 4-3.800s4 1.200 4 3.800z" fill="#0f3d5e"/></svg><span class="tx" style="left:31px">EU - EMA</span></div>
<div class="c" style="left:931px;width:200px"><svg class="ic-bld" viewBox="0 0 22 22"><path d="M1.500 8 11 2l9.500 6v1.500h-19z" fill="#4a4a4a"/><path d="M3.500 10.500h2.600v7H3.500zM7.800 10.500h2.600v7H7.800zM12 10.500h2.600v3H12zM16.200 10.500h2.400v2h-2.400zM1.500 18.500h9v2.300h-9z" fill="#4a4a4a"/><path d="M11.500 14h6.200l3 3v4.700h-9.200z" fill="#0f3d5e"/><path d="M13.200 17.200h4.500M13.200 19.300h5.500" stroke="#8a9aa6" stroke-width="1"/></svg><span class="tx" style="left:31px">CTD</span></div>
<div class="c" style="left:1131px;width:137px"><span class="av">SR</span><a class="lnk" style="left:30px">Sarah Roger (sar…</a></div>
<div class="c r" style="left:1268px;width:135px"><span class="tx">Jun 26, 2025</span></div>
<div class="c r" style="left:1403px;width:152px"><span class="tx" style="right:10px">Jun 26, 2025</span></div>
<div class="c mn" style="left:1555px;width:44px"><svg class="chev" viewBox="0 0 20 12"><path d="M2.500 2.500 10 9.500l7.500-7" fill="none" stroke="#222" stroke-width="2.700" stroke-linecap="round" stroke-linejoin="round"/></svg></div>
</div>
<div class="row" style="top:211px">
<div class="c num">5</div>
<div class="c" style="left:23px;width:200px"><svg class="ic-tpl" viewBox="0 0 20 20"><path d="M1.600 5V3.200c0-1 .6-1.600 1.600-1.600h3.600l1.600 1.900h8.400c1 0 1.600.6 1.600 1.600v11.700c0 1-.6 1.600-1.600 1.600H3.200c-1 0-1.600-.6-1.600-1.600z" fill="none" stroke="#1c1c1c" stroke-width="2.700"/><path d="M5.800 6.800h8.400v8.800H5.800z" fill="#8a8a8a" stroke="#2c2c2c" stroke-width="1.300"/><path d="M7.200 9.300h5.600M7.200 11.400h5.600M7.200 13.500h5.600" stroke="#222" stroke-width="1.300" fill="none"/></svg><a class="lnk" style="left:30px">Variation Submission Template</a></div>
<div class="c" style="left:223px;width:136px"><span class="tx">ST-000010</span></div>
<div class="c" style="left:359px;width:136px"><a class="lnk" style="left:10px">1</a></div>
<div class="c" style="left:495px;width:136px"><span class="bdg b-arch">Archived</span></div>
<div class="c" style="left:631px;width:150px"><span class="tx">Variation Submission</span></div>
<div class="c" style="left:781px;width:150px"><svg class="ic-bld" viewBox="0 0 22 22"><path d="M1.500 8 11 2l9.500 6v1.500h-19z" fill="#4a4a4a"/><path d="M3.500 10.500h2.600v7H3.500zM7.800 10.500h2.600v7H7.800zM12 10.500h2.600v5H12zM16.200 10.500h2.400v3.500h-2.400zM1.500 18.500h11v2.300h-11z" fill="#4a4a4a"/><circle cx="16.500" cy="15.300" r="2.300" fill="#0f3d5e"/><path d="M12.500 21.500c0-2.600 1.700-3.800 4-3.800s4 1.200 4 3.800z" fill="#0f3d5e"/></svg><span class="tx" style="left:31px">US - FDA</span></div>
<div class="c" style="left:931px;width:200px"><svg class="ic-bld" viewBox="0 0 22 22"><path d="M1.500 8 11 2l9.500 6v1.500h-19z" fill="#4a4a4a"/><path d="M3.500 10.500h2.600v7H3.500zM7.800 10.500h2.600v7H7.800zM12 10.500h2.600v3H12zM16.200 10.500h2.400v2h-2.400zM1.500 18.500h9v2.300h-9z" fill="#4a4a4a"/><path d="M11.500 14h6.200l3 3v4.700h-9.200z" fill="#0f3d5e"/><path d="M13.200 17.200h4.500M13.200 19.300h5.500" stroke="#8a9aa6" stroke-width="1"/></svg><span class="tx" style="left:31px">NDA</span></div>
<div class="c" style="left:1131px;width:137px"><span class="av">SR</span><a class="lnk" style="left:30px">Sarah Roger (sar…</a></div>
<div class="c r" style="left:1268px;width:135px"><span class="tx">Jun 26, 2025</span></div>
<div class="c r" style="left:1403px;width:152px"><span class="tx" style="right:10px">Jun 26, 2025</span></div>
<div class="c mn" style="left:1555px;width:44px"><svg class="chev" viewBox="0 0 20 12"><path d="M2.500 2.500 10 9.500l7.500-7" fill="none" stroke="#222" stroke-width="2.700" stroke-linecap="round" stroke-linejoin="round"/></svg></div>
</div>
<div class="row alt" style="top:237px">
<div class="c num">6</div>
<div class="c" style="left:23px;width:200px"><svg class="ic-tpl" viewBox="0 0 20 20"><path d="M1.600 5V3.200c0-1 .6-1.600 1.600-1.600h3.600l1.600 1.900h8.400c1 0 1.600.6 1.600 1.600v11.700c0 1-.6 1.600-1.600 1.600H3.200c-1 0-1.600-.6-1.600-1.600z" fill="none" stroke="#1c1c1c" stroke-width="2.700"/><path d="M5.800 6.800h8.400v8.800H5.800z" fill="#8a8a8a" stroke="#2c2c2c" stroke-width="1.300"/><path d="M7.200 9.300h5.600M7.200 11.400h5.600M7.200 13.500h5.600" stroke="#222" stroke-width="1.300" fill="none"/></svg><a class="lnk" style="left:30px">Renewal Submission Template</a></div>
<div class="c" style="left:223px;width:136px"><span class="tx">ST-000009</span></div>
<div class="c" style="left:359px;width:136px"><a class="lnk" style="left:10px">3</a></div>
<div class="c" style="left:495px;width:136px"><span class="bdg b-work">In Work</span></div>
<div class="c" style="left:631px;width:150px"><span class="tx">Renewal Submission</span></div>
<div class="c" style="left:781px;width:150px"><svg class="ic-bld" viewBox="0 0 22 22"><path d="M1.500 8 11 2l9.500 6v1.500h-19z" fill="#4a4a4a"/><path d="M3.500 10.500h2.600v7H3.500zM7.800 10.500h2.600v7H7.800zM12 10.500h2.600v5H12zM16.200 10.500h2.400v3.500h-2.400zM1.500 18.500h11v2.300h-11z" fill="#4a4a4a"/><circle cx="16.500" cy="15.300" r="2.300" fill="#0f3d5e"/><path d="M12.500 21.500c0-2.600 1.700-3.800 4-3.800s4 1.200 4 3.800z" fill="#0f3d5e"/></svg><span class="tx" style="left:31px">EU - EMA</span></div>
<div class="c" style="left:931px;width:200px"><svg class="ic-bld" viewBox="0 0 22 22"><path d="M1.500 8 11 2l9.500 6v1.500h-19z" fill="#4a4a4a"/><path d="M3.500 10.500h2.600v7H3.500zM7.800 10.500h2.600v7H7.800zM12 10.500h2.600v3H12zM16.200 10.500h2.400v2h-2.400zM1.500 18.500h9v2.300h-9z" fill="#4a4a4a"/><path d="M11.500 14h6.200l3 3v4.700h-9.200z" fill="#0f3d5e"/><path d="M13.200 17.200h4.500M13.200 19.300h5.500" stroke="#8a9aa6" stroke-width="1"/></svg><span class="tx" style="left:31px">CTD</span></div>
<div class="c" style="left:1131px;width:137px"><span class="av">SR</span><a class="lnk" style="left:30px">Sarah Roger (sar…</a></div>
<div class="c r" style="left:1268px;width:135px"><span class="tx">Jun 26, 2025</span></div>
<div class="c r" style="left:1403px;width:152px"><span class="tx" style="right:10px">Jun 26, 2025</span></div>
<div class="c mn" style="left:1555px;width:44px"><svg class="chev" viewBox="0 0 20 12"><path d="M2.500 2.500 10 9.500l7.500-7" fill="none" stroke="#222" stroke-width="2.700" stroke-linecap="round" stroke-linejoin="round"/></svg></div>
</div>
<div class="row" style="top:263px">
<div class="c num">7</div>
<div class="c" style="left:23px;width:200px"><svg class="ic-tpl" viewBox="0 0 20 20"><path d="M1.600 5V3.200c0-1 .6-1.600 1.600-1.600h3.600l1.600 1.900h8.400c1 0 1.600.6 1.600 1.600v11.700c0 1-.6 1.600-1.600 1.600H3.200c-1 0-1.600-.6-1.600-1.600z" fill="none" stroke="#1c1c1c" stroke-width="2.700"/><path d="M5.800 6.800h8.400v8.800H5.800z" fill="#8a8a8a" stroke="#2c2c2c" stroke-width="1.300"/><path d="M7.200 9.300h5.600M7.200 11.400h5.600M7.200 13.500h5.600" stroke="#222" stroke-width="1.300" fill="none"/></svg><a class="lnk" style="left:30px">Variation Submission Template</a></div>
<div class="c" style="left:223px;width:136px"><span class="tx">ST-000010</span></div>
<div class="c" style="left:359px;width:136px"><a class="lnk" style="left:10px">2</a></div>
<div class="c" style="left:495px;width:136px"><span class="bdg b-arch">Archived</span></div>
<div class="c" style="left:631px;width:150px"><span class="tx">Variation Submission</span></div>
<div class="c" style="left:781px;width:150px"><svg class="ic-bld" viewBox="0 0 22 22"><path d="M1.500 8 11 2l9.500 6v1.500h-19z" fill="#4a4a4a"/><path d="M3.500 10.500h2.600v7H3.500zM7.800 10.500h2.600v7H7.800zM12 10.500h2.600v5H12zM16.200 10.500h2.400v3.500h-2.400zM1.500 18.500h11v2.300h-11z" fill="#4a4a4a"/><circle cx="16.500" cy="15.300" r="2.300" fill="#0f3d5e"/><path d="M12.500 21.500c0-2.600 1.700-3.800 4-3.800s4 1.200 4 3.800z" fill="#0f3d5e"/></svg><span class="tx" style="left:31px">US - FDA</span></div>
<div class="c" style="left:931px;width:200px"><svg class="ic-bld" viewBox="0 0 22 22"><path d="M1.500 8 11 2l9.500 6v1.500h-19z" fill="#4a4a4a"/><path d="M3.500 10.500h2.600v7H3.500zM7.800 10.500h2.600v7H7.800zM12 10.500h2.600v3H12zM16.200 10.500h2.400v2h-2.400zM1.500 18.500h9v2.300h-9z" fill="#4a4a4a"/><path d="M11.500 14h6.200l3 3v4.700h-9.200z" fill="#0f3d5e"/><path d="M13.200 17.200h4.500M13.200 19.300h5.500" stroke="#8a9aa6" stroke-width="1"/></svg><span class="tx" style="left:31px">NDA</span></div>
<div class="c" style="left:1131px;width:137px"><span class="av">SR</span><a class="lnk" style="left:30px">Sarah Roger (sar…</a></div>
<div class="c r" style="left:1268px;width:135px"><span class="tx">Jun 26, 2025</span></div>
<div class="c r" style="left:1403px;width:152px"><span class="tx" style="right:10px">Jun 26, 2025</span></div>
<div class="c mn" style="left:1555px;width:44px"><svg class="chev" viewBox="0 0 20 12"><path d="M2.500 2.500 10 9.500l7.500-7" fill="none" stroke="#222" stroke-width="2.700" stroke-linecap="round" stroke-linejoin="round"/></svg></div>
</div>
<div class="row alt" style="top:289px">
<div class="c num">8</div>
<div class="c" style="left:23px;width:200px"><svg class="ic-tpl" viewBox="0 0 20 20"><path d="M1.600 5V3.200c0-1 .6-1.600 1.600-1.600h3.600l1.600 1.900h8.400c1 0 1.600.6 1.600 1.600v11.700c0 1-.6 1.600-1.600 1.600H3.200c-1 0-1.600-.6-1.600-1.600z" fill="none" stroke="#1c1c1c" stroke-width="2.700"/><path d="M5.800 6.800h8.400v8.800H5.800z" fill="#8a8a8a" stroke="#2c2c2c" stroke-width="1.300"/><path d="M7.200 9.300h5.600M7.200 11.400h5.600M7.200 13.500h5.600" stroke="#222" stroke-width="1.300" fill="none"/></svg><a class="lnk" style="left:30px">Initial Submission Template</a></div>
<div class="c" style="left:223px;width:136px"><span class="tx">ST-000008</span></div>
<div class="c" style="left:359px;width:136px"><a class="lnk" style="left:10px">3</a></div>
<div class="c" style="left:495px;width:136px"><span class="bdg b-arch">Archived</span></div>
<div class="c" style="left:631px;width:150px"><span class="tx">Initial Submission</span></div>
<div class="c" style="left:781px;width:150px"><svg class="ic-bld" viewBox="0 0 22 22"><path d="M1.500 8 11 2l9.500 6v1.500h-19z" fill="#4a4a4a"/><path d="M3.500 10.500h2.600v7H3.500zM7.800 10.500h2.600v7H7.800zM12 10.500h2.600v5H12zM16.200 10.500h2.400v3.500h-2.400zM1.500 18.500h11v2.300h-11z" fill="#4a4a4a"/><circle cx="16.500" cy="15.300" r="2.300" fill="#0f3d5e"/><path d="M12.500 21.500c0-2.600 1.700-3.800 4-3.800s4 1.200 4 3.800z" fill="#0f3d5e"/></svg><span class="tx" style="left:31px">US - FDA</span></div>
<div class="c" style="left:931px;width:200px"><svg class="ic-bld" viewBox="0 0 22 22"><path d="M1.500 8 11 2l9.500 6v1.500h-19z" fill="#4a4a4a"/><path d="M3.500 10.500h2.600v7H3.500zM7.800 10.500h2.600v7H7.800zM12 10.500h2.600v3H12zM16.200 10.500h2.400v2h-2.400zM1.500 18.500h9v2.300h-9z" fill="#4a4a4a"/><path d="M11.500 14h6.200l3 3v4.700h-9.200z" fill="#0f3d5e"/><path d="M13.200 17.200h4.500M13.200 19.300h5.500" stroke="#8a9aa6" stroke-width="1"/></svg><span class="tx" style="left:31px">BLA</span></div>
<div class="c" style="left:1131px;width:137px"><span class="av">SR</span><a class="lnk" style="left:30px">Sarah Roger (sar…</a></div>
<div class="c r" style="left:1268px;width:135px"><span class="tx">Jun 26, 2025</span></div>
<div class="c r" style="left:1403px;width:152px"><span class="tx" style="right:10px">Jun 26, 2025</span></div>
<div class="c mn" style="left:1555px;width:44px"><svg class="chev" viewBox="0 0 20 12"><path d="M2.500 2.500 10 9.500l7.500-7" fill="none" stroke="#222" stroke-width="2.700" stroke-linecap="round" stroke-linejoin="round"/></svg></div>
</div>
<div class="row" style="top:315px">
<div class="c num">9</div>
<div class="c" style="left:23px;width:200px"><svg class="ic-tpl" viewBox="0 0 20 20"><path d="M1.600 5V3.200c0-1 .6-1.600 1.600-1.600h3.600l1.600 1.900h8.400c1 0 1.600.6 1.600 1.600v11.700c0 1-.6 1.600-1.600 1.600H3.200c-1 0-1.600-.6-1.600-1.600z" fill="none" stroke="#1c1c1c" stroke-width="2.700"/><path d="M5.800 6.800h8.400v8.800H5.800z" fill="#8a8a8a" stroke="#2c2c2c" stroke-width="1.300"/><path d="M7.200 9.300h5.600M7.200 11.400h5.600M7.200 13.500h5.600" stroke="#222" stroke-width="1.300" fill="none"/></svg><a class="lnk" style="left:30px">Initial Submission Template</a></div>
<div class="c" style="left:223px;width:136px"><span class="tx">ST-000008</span></div>
<div class="c" style="left:359px;width:136px"><a class="lnk" style="left:10px">4</a></div>
<div class="c" style="left:495px;width:136px"><span class="bdg b-arch">Archived</span></div>
<div class="c" style="left:631px;width:150px"><span class="tx">Initial Submission</span></div>
<div class="c" style="left:781px;width:150px"><svg class="ic-bld" viewBox="0 0 22 22"><path d="M1.500 8 11 2l9.500 6v1.500h-19z" fill="#4a4a4a"/><path d="M3.500 10.500h2.600v7H3.500zM7.800 10.500h2.600v7H7.800zM12 10.500h2.600v5H12zM16.200 10.500h2.400v3.500h-2.400zM1.500 18.500h11v2.300h-11z" fill="#4a4a4a"/><circle cx="16.500" cy="15.300" r="2.300" fill="#0f3d5e"/><path d="M12.500 21.500c0-2.600 1.700-3.800 4-3.800s4 1.200 4 3.800z" fill="#0f3d5e"/></svg><span class="tx" style="left:31px">US - FDA</span></div>
<div class="c" style="left:931px;width:200px"><svg class="ic-bld" viewBox="0 0 22 22"><path d="M1.500 8 11 2l9.500 6v1.500h-19z" fill="#4a4a4a"/><path d="M3.500 10.500h2.600v7H3.500zM7.800 10.500h2.600v7H7.800zM12 10.500h2.600v3H12zM16.200 10.500h2.400v2h-2.400zM1.500 18.500h9v2.300h-9z" fill="#4a4a4a"/><path d="M11.500 14h6.200l3 3v4.700h-9.200z" fill="#0f3d5e"/><path d="M13.200 17.200h4.500M13.200 19.300h5.500" stroke="#8a9aa6" stroke-width="1"/></svg><span class="tx" style="left:31px">BLA</span></div>
<div class="c" style="left:1131px;width:137px"><span class="av">SR</span><a class="lnk" style="left:30px">Sarah Roger (sar…</a></div>
<div class="c r" style="left:1268px;width:135px"><span class="tx">Jun 26, 2025</span></div>
<div class="c r" style="left:1403px;width:152px"><span class="tx" style="right:10px">Jun 26, 2025</span></div>
<div class="c mn" style="left:1555px;width:44px"><svg class="chev" viewBox="0 0 20 12"><path d="M2.500 2.500 10 9.500l7.500-7" fill="none" stroke="#222" stroke-width="2.700" stroke-linecap="round" stroke-linejoin="round"/></svg></div>
</div>
<div class="row alt" style="top:341px">
<div class="c num">10</div>
<div class="c" style="left:23px;width:200px"><svg class="ic-tpl" viewBox="0 0 20 20"><path d="M1.600 5V3.200c0-1 .6-1.600 1.600-1.600h3.600l1.600 1.900h8.400c1 0 1.600.6 1.600 1.600v11.700c0 1-.6 1.600-1.600 1.600H3.200c-1 0-1.600-.6-1.600-1.600z" fill="none" stroke="#1c1c1c" stroke-width="2.700"/><path d="M5.800 6.800h8.400v8.800H5.800z" fill="#8a8a8a" stroke="#2c2c2c" stroke-width="1.300"/><path d="M7.200 9.300h5.600M7.200 11.400h5.600M7.200 13.500h5.600" stroke="#222" stroke-width="1.300" fill="none"/></svg><a class="lnk" style="left:30px">Initial Submission Template</a></div>
<div class="c" style="left:223px;width:136px"><span class="tx">ST-000008</span></div>
<div class="c" style="left:359px;width:136px"><a class="lnk" style="left:10px">5</a></div>
<div class="c" style="left:495px;width:136px"><span class="bdg b-rel">Released</span></div>
<div class="c" style="left:631px;width:150px"><span class="tx">Initial Submission</span></div>
<div class="c" style="left:781px;width:150px"><svg class="ic-bld" viewBox="0 0 22 22"><path d="M1.500 8 11 2l9.500 6v1.500h-19z" fill="#4a4a4a"/><path d="M3.500 10.500h2.600v7H3.500zM7.800 10.500h2.600v7H7.800zM12 10.500h2.600v5H12zM16.200 10.500h2.400v3.500h-2.400zM1.500 18.500h11v2.300h-11z" fill="#4a4a4a"/><circle cx="16.500" cy="15.300" r="2.300" fill="#0f3d5e"/><path d="M12.500 21.500c0-2.600 1.700-3.800 4-3.800s4 1.200 4 3.800z" fill="#0f3d5e"/></svg><span class="tx" style="left:31px">US - FDA</span></div>
<div class="c" style="left:931px;width:200px"><svg class="ic-bld" viewBox="0 0 22 22"><path d="M1.500 8 11 2l9.500 6v1.500h-19z" fill="#4a4a4a"/><path d="M3.500 10.500h2.600v7H3.500zM7.800 10.500h2.600v7H7.800zM12 10.500h2.600v3H12zM16.200 10.500h2.400v2h-2.400zM1.500 18.500h9v2.300h-9z" fill="#4a4a4a"/><path d="M11.500 14h6.200l3 3v4.700h-9.200z" fill="#0f3d5e"/><path d="M13.200 17.200h4.500M13.200 19.300h5.500" stroke="#8a9aa6" stroke-width="1"/></svg><span class="tx" style="left:31px">BLA</span></div>
<div class="c" style="left:1131px;width:137px"><span class="av">SR</span><a class="lnk" style="left:30px">Sarah Roger (sar…</a></div>
<div class="c r" style="left:1268px;width:135px"><span class="tx">Jun 26, 2025</span></div>
<div class="c r" style="left:1403px;width:152px"><span class="tx" style="right:10px">Jun 26, 2025</span></div>
<div class="c mn" style="left:1555px;width:44px"><svg class="chev" viewBox="0 0 20 12"><path d="M2.500 2.500 10 9.500l7.500-7" fill="none" stroke="#222" stroke-width="2.700" stroke-linecap="round" stroke-linejoin="round"/></svg></div>
</div>
<div class="row" style="top:367px">
<div class="c num">11</div>
<div class="c" style="left:23px;width:200px"><svg class="ic-tpl" viewBox="0 0 20 20"><path d="M1.600 5V3.200c0-1 .6-1.600 1.600-1.600h3.600l1.600 1.900h8.400c1 0 1.600.6 1.600 1.600v11.700c0 1-.6 1.600-1.600 1.600H3.200c-1 0-1.600-.6-1.600-1.600z" fill="none" stroke="#1c1c1c" stroke-width="2.700"/><path d="M5.800 6.800h8.400v8.800H5.800z" fill="#8a8a8a" stroke="#2c2c2c" stroke-width="1.300"/><path d="M7.200 9.300h5.600M7.200 11.400h5.600M7.200 13.500h5.600" stroke="#222" stroke-width="1.300" fill="none"/></svg><a class="lnk" style="left:30px">Variation Submission Template</a></div>
<div class="c" style="left:223px;width:136px"><span class="tx">ST-000010</span></div>
<div class="c" style="left:359px;width:136px"><a class="lnk" style="left:10px">3</a></div>
<div class="c" style="left:495px;width:136px"><span class="bdg b-arch">Archived</span></div>
<div class="c" style="left:631px;width:150px"><span class="tx">Variation Submission</span></div>
<div class="c" style="left:781px;width:150px"><svg class="ic-bld" viewBox="0 0 22 22"><path d="M1.500 8 11 2l9.500 6v1.500h-19z" fill="#4a4a4a"/><path d="M3.500 10.500h2.600v7H3.500zM7.800 10.500h2.600v7H7.800zM12 10.500h2.600v5H12zM16.200 10.500h2.400v3.500h-2.400zM1.500 18.500h11v2.300h-11z" fill="#4a4a4a"/><circle cx="16.500" cy="15.300" r="2.300" fill="#0f3d5e"/><path d="M12.500 21.500c0-2.600 1.700-3.800 4-3.800s4 1.200 4 3.800z" fill="#0f3d5e"/></svg><span class="tx" style="left:31px">US - FDA</span></div>
<div class="c" style="left:931px;width:200px"><svg class="ic-bld" viewBox="0 0 22 22"><path d="M1.500 8 11 2l9.500 6v1.500h-19z" fill="#4a4a4a"/><path d="M3.500 10.500h2.600v7H3.500zM7.800 10.500h2.600v7H7.800zM12 10.500h2.600v3H12zM16.200 10.500h2.400v2h-2.400zM1.500 18.500h9v2.300h-9z" fill="#4a4a4a"/><path d="M11.500 14h6.200l3 3v4.700h-9.200z" fill="#0f3d5e"/><path d="M13.200 17.200h4.500M13.200 19.300h5.500" stroke="#8a9aa6" stroke-width="1"/></svg><span class="tx" style="left:31px">NDA</span></div>
<div class="c" style="left:1131px;width:137px"><span class="av">SR</span><a class="lnk" style="left:30px">Sarah Roger (sar…</a></div>
<div class="c r" style="left:1268px;width:135px"><span class="tx">Jun 26, 2025</span></div>
<div class="c r" style="left:1403px;width:152px"><span class="tx" style="right:10px">Jun 26, 2025</span></div>
<div class="c mn" style="left:1555px;width:44px"><svg class="chev" viewBox="0 0 20 12"><path d="M2.500 2.500 10 9.500l7.500-7" fill="none" stroke="#222" stroke-width="2.700" stroke-linecap="round" stroke-linejoin="round"/></svg></div>
</div>
<div class="row alt" style="top:393px">
<div class="c num">12</div>
<div class="c" style="left:23px;width:200px"><svg class="ic-tpl" viewBox="0 0 20 20"><path d="M1.600 5V3.200c0-1 .6-1.600 1.600-1.600h3.600l1.600 1.900h8.400c1 0 1.600.6 1.600 1.600v11.700c0 1-.6 1.600-1.600 1.600H3.200c-1 0-1.600-.6-1.600-1.600z" fill="none" stroke="#1c1c1c" stroke-width="2.700"/><path d="M5.800 6.800h8.400v8.800H5.800z" fill="#8a8a8a" stroke="#2c2c2c" stroke-width="1.300"/><path d="M7.200 9.300h5.600M7.200 11.400h5.600M7.200 13.500h5.600" stroke="#222" stroke-width="1.300" fill="none"/></svg><a class="lnk" style="left:30px">Initial Submission Template</a></div>
<div class="c" style="left:223px;width:136px"><span class="tx">ST-000008</span></div>
<div class="c" style="left:359px;width:136px"><a class="lnk" style="left:10px">6</a></div>
<div class="c" style="left:495px;width:136px"><span class="bdg b-work">In Work</span></div>
<div class="c" style="left:631px;width:150px"><span class="tx">Initial Submission</span></div>
<div class="c" style="left:781px;width:150px"><svg class="ic-bld" viewBox="0 0 22 22"><path d="M1.500 8 11 2l9.500 6v1.500h-19z" fill="#4a4a4a"/><path d="M3.500 10.500h2.600v7H3.500zM7.800 10.500h2.600v7H7.800zM12 10.500h2.600v5H12zM16.200 10.500h2.400v3.500h-2.400zM1.500 18.500h11v2.300h-11z" fill="#4a4a4a"/><circle cx="16.500" cy="15.300" r="2.300" fill="#0f3d5e"/><path d="M12.500 21.500c0-2.600 1.700-3.800 4-3.800s4 1.200 4 3.800z" fill="#0f3d5e"/></svg><span class="tx" style="left:31px">US - FDA</span></div>
<div class="c" style="left:931px;width:200px"><svg class="ic-bld" viewBox="0 0 22 22"><path d="M1.500 8 11 2l9.500 6v1.500h-19z" fill="#4a4a4a"/><path d="M3.500 10.500h2.600v7H3.500zM7.800 10.500h2.600v7H7.800zM12 10.500h2.600v3H12zM16.200 10.500h2.400v2h-2.400zM1.500 18.500h9v2.300h-9z" fill="#4a4a4a"/><path d="M11.500 14h6.200l3 3v4.700h-9.200z" fill="#0f3d5e"/><path d="M13.200 17.200h4.500M13.200 19.300h5.500" stroke="#8a9aa6" stroke-width="1"/></svg><span class="tx" style="left:31px">BLA</span></div>
<div class="c" style="left:1131px;width:137px"><span class="av">SR</span><a class="lnk" style="left:30px">Sarah Roger (sar…</a></div>
<div class="c r" style="left:1268px;width:135px"><span class="tx">Jun 26, 2025</span></div>
<div class="c r" style="left:1403px;width:152px"><span class="tx" style="right:10px">Jun 26, 2025</span></div>
<div class="c mn" style="left:1555px;width:44px"><svg class="chev" viewBox="0 0 20 12"><path d="M2.500 2.500 10 9.500l7.500-7" fill="none" stroke="#222" stroke-width="2.700" stroke-linecap="round" stroke-linejoin="round"/></svg></div>
</div>
<div class="row sel" style="top:419px">
<div class="c num"><span class="cb"><svg viewBox="0 0 16 16"><path d="M3.200 8.300l3.200 3.200 6.200-6.600" fill="none" stroke="#cfd9df" stroke-width="2.400"/></svg></span></div>
<div class="c" style="left:23px;width:200px"><svg class="ic-tpl" viewBox="0 0 20 20"><path d="M1.600 5V3.200c0-1 .6-1.600 1.600-1.600h3.600l1.600 1.900h8.400c1 0 1.600.6 1.600 1.600v11.700c0 1-.6 1.600-1.600 1.600H3.200c-1 0-1.600-.6-1.600-1.600z" fill="none" stroke="#1c1c1c" stroke-width="2.700"/><path d="M5.800 6.800h8.400v8.800H5.800z" fill="#8a8a8a" stroke="#2c2c2c" stroke-width="1.300"/><path d="M7.200 9.300h5.600M7.200 11.400h5.600M7.200 13.500h5.600" stroke="#222" stroke-width="1.300" fill="none"/></svg><a class="lnk" style="left:30px">Variation Submission Template</a></div>
<div class="c" style="left:223px;width:136px"><span class="tx">ST-000010</span></div>
<div class="c" style="left:359px;width:136px"><a class="lnk" style="left:10px">4</a></div>
<div class="c" style="left:495px;width:136px"><span class="bdg b-rel">Released</span></div>
<div class="c" style="left:631px;width:150px"><span class="tx">Variation Submission</span></div>
<div class="c" style="left:781px;width:150px"><svg class="ic-bld" viewBox="0 0 22 22"><path d="M1.500 8 11 2l9.500 6v1.500h-19z" fill="#4a4a4a"/><path d="M3.500 10.500h2.600v7H3.500zM7.800 10.500h2.600v7H7.800zM12 10.500h2.600v5H12zM16.200 10.500h2.400v3.500h-2.400zM1.500 18.500h11v2.300h-11z" fill="#4a4a4a"/><circle cx="16.500" cy="15.300" r="2.300" fill="#0f3d5e"/><path d="M12.500 21.500c0-2.600 1.700-3.800 4-3.800s4 1.200 4 3.800z" fill="#0f3d5e"/></svg><span class="tx" style="left:31px">US - FDA</span></div>
<div class="c" style="left:931px;width:200px"><svg class="ic-bld" viewBox="0 0 22 22"><path d="M1.500 8 11 2l9.500 6v1.500h-19z" fill="#4a4a4a"/><path d="M3.500 10.500h2.600v7H3.500zM7.800 10.500h2.600v7H7.800zM12 10.500h2.600v3H12zM16.200 10.500h2.400v2h-2.400zM1.500 18.500h9v2.300h-9z" fill="#4a4a4a"/><path d="M11.500 14h6.200l3 3v4.700h-9.200z" fill="#0f3d5e"/><path d="M13.200 17.200h4.500M13.200 19.300h5.500" stroke="#8a9aa6" stroke-width="1"/></svg><span class="tx" style="left:31px">NDA</span></div>
<div class="c" style="left:1131px;width:137px"><span class="av">SR</span><a class="lnk" style="left:30px">Sarah Roger (sar…</a></div>
<div class="c r" style="left:1268px;width:135px"><span class="tx">Jun 26, 2025</span></div>
<div class="c r" style="left:1403px;width:152px"><span class="tx" style="right:10px">Jun 26, 2025</span></div>
<div class="c mn" style="left:1555px;width:44px"><svg class="chev" viewBox="0 0 20 12"><path d="M2.500 2.500 10 9.500l7.500-7" fill="none" stroke="#222" stroke-width="2.700" stroke-linecap="round" stroke-linejoin="round"/></svg></div>
</div>
<div class="row alt" style="top:445px">
<div class="c num">14</div>
<div class="c" style="left:23px;width:200px"><svg class="ic-tpl" viewBox="0 0 20 20"><path d="M1.600 5V3.200c0-1 .6-1.600 1.600-1.600h3.600l1.600 1.900h8.400c1 0 1.600.6 1.600 1.600v11.700c0 1-.6 1.600-1.600 1.600H3.200c-1 0-1.600-.6-1.600-1.600z" fill="none" stroke="#1c1c1c" stroke-width="2.700"/><path d="M5.800 6.800h8.400v8.800H5.800z" fill="#8a8a8a" stroke="#2c2c2c" stroke-width="1.300"/><path d="M7.200 9.300h5.600M7.200 11.400h5.600M7.200 13.500h5.600" stroke="#222" stroke-width="1.300" fill="none"/></svg><a class="lnk" style="left:30px">Submission Template A</a></div>
<div class="c" style="left:223px;width:136px"><span class="tx">ST-000011</span></div>
<div class="c" style="left:359px;width:136px"><a class="lnk" style="left:10px">1</a></div>
<div class="c" style="left:495px;width:136px"><span class="bdg b-arch">Archived</span></div>
<div class="c" style="left:631px;width:150px"><span class="tx">Initial Submission</span></div>
<div class="c" style="left:781px;width:150px"><svg class="ic-bld" viewBox="0 0 22 22"><path d="M1.500 8 11 2l9.500 6v1.500h-19z" fill="#4a4a4a"/><path d="M3.500 10.500h2.600v7H3.500zM7.800 10.500h2.600v7H7.800zM12 10.500h2.600v5H12zM16.200 10.500h2.400v3.500h-2.400zM1.500 18.500h11v2.300h-11z" fill="#4a4a4a"/><circle cx="16.500" cy="15.300" r="2.300" fill="#0f3d5e"/><path d="M12.500 21.500c0-2.600 1.700-3.800 4-3.800s4 1.200 4 3.800z" fill="#0f3d5e"/></svg><span class="tx" style="left:31px">US - FDA</span></div>
<div class="c" style="left:931px;width:200px"><svg class="ic-bld" viewBox="0 0 22 22"><path d="M1.500 8 11 2l9.500 6v1.500h-19z" fill="#4a4a4a"/><path d="M3.500 10.500h2.600v7H3.500zM7.800 10.500h2.600v7H7.800zM12 10.500h2.600v3H12zM16.200 10.500h2.400v2h-2.400zM1.500 18.500h9v2.300h-9z" fill="#4a4a4a"/><path d="M11.500 14h6.200l3 3v4.700h-9.200z" fill="#0f3d5e"/><path d="M13.200 17.200h4.500M13.200 19.300h5.500" stroke="#8a9aa6" stroke-width="1"/></svg><span class="tx" style="left:31px">BLA</span></div>
<div class="c" style="left:1131px;width:137px"><span class="av">SR</span><a class="lnk" style="left:30px">Sarah Roger (sar…</a></div>
<div class="c r" style="left:1268px;width:135px"><span class="tx">Jun 26, 2025</span></div>
<div class="c r" style="left:1403px;width:152px"><span class="tx" style="right:10px">Jun 26, 2025</span></div>
<div class="c mn" style="left:1555px;width:44px"><svg class="chev" viewBox="0 0 20 12"><path d="M2.500 2.500 10 9.500l7.500-7" fill="none" stroke="#222" stroke-width="2.700" stroke-linecap="round" stroke-linejoin="round"/></svg></div>
</div>
<div class="row" style="top:471px">
<div class="c num">15</div>
<div class="c" style="left:23px;width:200px"><svg class="ic-tpl" viewBox="0 0 20 20"><path d="M1.600 5V3.200c0-1 .6-1.600 1.600-1.600h3.600l1.600 1.900h8.400c1 0 1.600.6 1.600 1.600v11.700c0 1-.6 1.600-1.600 1.600H3.200c-1 0-1.600-.6-1.600-1.600z" fill="none" stroke="#1c1c1c" stroke-width="2.700"/><path d="M5.800 6.800h8.400v8.800H5.800z" fill="#8a8a8a" stroke="#2c2c2c" stroke-width="1.300"/><path d="M7.200 9.300h5.600M7.200 11.400h5.600M7.200 13.500h5.600" stroke="#222" stroke-width="1.300" fill="none"/></svg><a class="lnk" style="left:30px">Submission Template B</a></div>
<div class="c" style="left:223px;width:136px"><span class="tx">ST-000012</span></div>
<div class="c" style="left:359px;width:136px"><a class="lnk" style="left:10px">1</a></div>
<div class="c" style="left:495px;width:136px"><span class="bdg b-arch">Archived</span></div>
<div class="c" style="left:631px;width:150px"><span class="tx">Initial Submission</span></div>
<div class="c" style="left:781px;width:150px"><svg class="ic-bld" viewBox="0 0 22 22"><path d="M1.500 8 11 2l9.500 6v1.500h-19z" fill="#4a4a4a"/><path d="M3.500 10.500h2.600v7H3.500zM7.800 10.500h2.600v7H7.800zM12 10.500h2.600v5H12zM16.200 10.500h2.400v3.500h-2.400zM1.500 18.500h11v2.300h-11z" fill="#4a4a4a"/><circle cx="16.500" cy="15.300" r="2.300" fill="#0f3d5e"/><path d="M12.500 21.500c0-2.600 1.700-3.800 4-3.800s4 1.200 4 3.800z" fill="#0f3d5e"/></svg><span class="tx" style="left:31px">US - FDA</span></div>
<div class="c" style="left:931px;width:200px"><svg class="ic-bld" viewBox="0 0 22 22"><path d="M1.500 8 11 2l9.500 6v1.500h-19z" fill="#4a4a4a"/><path d="M3.500 10.500h2.600v7H3.500zM7.800 10.500h2.600v7H7.800zM12 10.500h2.600v3H12zM16.200 10.500h2.400v2h-2.400zM1.500 18.500h9v2.300h-9z" fill="#4a4a4a"/><path d="M11.500 14h6.200l3 3v4.700h-9.200z" fill="#0f3d5e"/><path d="M13.200 17.200h4.500M13.200 19.300h5.500" stroke="#8a9aa6" stroke-width="1"/></svg><span class="tx" style="left:31px">BLA</span></div>
<div class="c" style="left:1131px;width:137px"><span class="av">SR</span><a class="lnk" style="left:30px">Sarah Roger (sar…</a></div>
<div class="c r" style="left:1268px;width:135px"><span class="tx">Jun 26, 2025</span></div>
<div class="c r" style="left:1403px;width:152px"><span class="tx" style="right:10px">Jun 26, 2025</span></div>
<div class="c mn" style="left:1555px;width:44px"><svg class="chev" viewBox="0 0 20 12"><path d="M2.500 2.500 10 9.500l7.500-7" fill="none" stroke="#222" stroke-width="2.700" stroke-linecap="round" stroke-linejoin="round"/></svg></div>
</div>
<div class="row alt" style="top:497px">
<div class="c num">16</div>
<div class="c" style="left:23px;width:200px"><svg class="ic-tpl" viewBox="0 0 20 20"><path d="M1.600 5V3.200c0-1 .6-1.600 1.600-1.600h3.600l1.600 1.900h8.400c1 0 1.600.6 1.600 1.600v11.700c0 1-.6 1.600-1.600 1.600H3.200c-1 0-1.600-.6-1.600-1.600z" fill="none" stroke="#1c1c1c" stroke-width="2.700"/><path d="M5.800 6.800h8.400v8.800H5.800z" fill="#8a8a8a" stroke="#2c2c2c" stroke-width="1.300"/><path d="M7.200 9.300h5.600M7.200 11.400h5.600M7.200 13.500h5.600" stroke="#222" stroke-width="1.300" fill="none"/></svg><a class="lnk" style="left:30px">Submission Template C</a></div>
<div class="c" style="left:223px;width:136px"><span class="tx">ST-000013</span></div>
<div class="c" style="left:359px;width:136px"><a class="lnk" style="left:10px">1</a></div>
<div class="c" style="left:495px;width:136px"><span class="bdg b-arch">Archived</span></div>
<div class="c" style="left:631px;width:150px"><span class="tx">Initial Submission</span></div>
<div class="c" style="left:781px;width:150px"><svg class="ic-bld" viewBox="0 0 22 22"><path d="M1.500 8 11 2l9.500 6v1.500h-19z" fill="#4a4a4a"/><path d="M3.500 10.500h2.600v7H3.500zM7.800 10.500h2.600v7H7.800zM12 10.500h2.600v5H12zM16.200 10.500h2.400v3.500h-2.400zM1.500 18.500h11v2.300h-11z" fill="#4a4a4a"/><circle cx="16.500" cy="15.300" r="2.300" fill="#0f3d5e"/><path d="M12.500 21.500c0-2.600 1.700-3.800 4-3.800s4 1.200 4 3.800z" fill="#0f3d5e"/></svg><span class="tx" style="left:31px">US - FDA</span></div>
<div class="c" style="left:931px;width:200px"><svg class="ic-bld" viewBox="0 0 22 22"><path d="M1.500 8 11 2l9.500 6v1.500h-19z" fill="#4a4a4a"/><path d="M3.500 10.500h2.600v7H3.500zM7.800 10.500h2.600v7H7.800zM12 10.500h2.600v3H12zM16.200 10.500h2.400v2h-2.400zM1.500 18.500h9v2.300h-9z" fill="#4a4a4a"/><path d="M11.500 14h6.200l3 3v4.700h-9.200z" fill="#0f3d5e"/><path d="M13.200 17.200h4.500M13.200 19.300h5.500" stroke="#8a9aa6" stroke-width="1"/></svg><span class="tx" style="left:31px">BLA</span></div>
<div class="c" style="left:1131px;width:137px"><span class="av">SR</span><a class="lnk" style="left:30px">Sarah Roger (sar…</a></div>
<div class="c r" style="left:1268px;width:135px"><span class="tx">Jun 26, 2025</span></div>
<div class="c r" style="left:1403px;width:152px"><span class="tx" style="right:10px">Jun 26, 2025</span></div>
<div class="c mn" style="left:1555px;width:44px"><svg class="chev" viewBox="0 0 20 12"><path d="M2.500 2.500 10 9.500l7.500-7" fill="none" stroke="#222" stroke-width="2.700" stroke-linecap="round" stroke-linejoin="round"/></svg></div>
</div>
<div class="row" style="top:523px">
<div class="c num">17</div>
<div class="c" style="left:23px;width:200px"><svg class="ic-tpl" viewBox="0 0 20 20"><path d="M1.600 5V3.200c0-1 .6-1.600 1.600-1.600h3.600l1.600 1.900h8.400c1 0 1.600.6 1.600 1.600v11.700c0 1-.6 1.600-1.600 1.600H3.200c-1 0-1.600-.6-1.600-1.600z" fill="none" stroke="#1c1c1c" stroke-width="2.700"/><path d="M5.800 6.800h8.400v8.800H5.800z" fill="#8a8a8a" stroke="#2c2c2c" stroke-width="1.300"/><path d="M7.200 9.300h5.600M7.200 11.400h5.600M7.200 13.500h5.600" stroke="#222" stroke-width="1.300" fill="none"/></svg><a class="lnk" style="left:30px">Submission Template D</a></div>
<div class="c" style="left:223px;width:136px"><span class="tx">ST-000014</span></div>
<div class="c" style="left:359px;width:136px"><a class="lnk" style="left:10px">1</a></div>
<div class="c" style="left:495px;width:136px"><span class="bdg b-arch">Archived</span></div>
<div class="c" style="left:631px;width:150px"><span class="tx">Initial Submission</span></div>
<div class="c" style="left:781px;width:150px"><svg class="ic-bld" viewBox="0 0 22 22"><path d="M1.500 8 11 2l9.500 6v1.500h-19z" fill="#4a4a4a"/><path d="M3.500 10.500h2.600v7H3.500zM7.800 10.500h2.600v7H7.800zM12 10.500h2.600v5H12zM16.200 10.500h2.400v3.500h-2.400zM1.500 18.500h11v2.300h-11z" fill="#4a4a4a"/><circle cx="16.500" cy="15.300" r="2.300" fill="#0f3d5e"/><path d="M12.500 21.500c0-2.600 1.700-3.800 4-3.800s4 1.200 4 3.800z" fill="#0f3d5e"/></svg><span class="tx" style="left:31px">US - FDA</span></div>
<div class="c" style="left:931px;width:200px"><svg class="ic-bld" viewBox="0 0 22 22"><path d="M1.500 8 11 2l9.500 6v1.500h-19z" fill="#4a4a4a"/><path d="M3.500 10.500h2.600v7H3.500zM7.800 10.500h2.600v7H7.800zM12 10.500h2.600v3H12zM16.200 10.500h2.400v2h-2.400zM1.500 18.500h9v2.300h-9z" fill="#4a4a4a"/><path d="M11.500 14h6.200l3 3v4.700h-9.200z" fill="#0f3d5e"/><path d="M13.200 17.200h4.500M13.200 19.300h5.500" stroke="#8a9aa6" stroke-width="1"/></svg><span class="tx" style="left:31px">BLA</span></div>
<div class="c" style="left:1131px;width:137px"><span class="av">SR</span><a class="lnk" style="left:30px">Sarah Roger (sar…</a></div>
<div class="c r" style="left:1268px;width:135px"><span class="tx">Jun 26, 2025</span></div>
<div class="c r" style="left:1403px;width:152px"><span class="tx" style="right:10px">Jun 26, 2025</span></div>
<div class="c mn" style="left:1555px;width:44px"><svg class="chev" viewBox="0 0 20 12"><path d="M2.500 2.500 10 9.500l7.500-7" fill="none" stroke="#222" stroke-width="2.700" stroke-linecap="round" stroke-linejoin="round"/></svg></div>
</div>
<div class="row alt" style="top:549px">
<div class="c num">18</div>
<div class="c" style="left:23px;width:200px"><svg class="ic-tpl" viewBox="0 0 20 20"><path d="M1.600 5V3.200c0-1 .6-1.600 1.600-1.600h3.600l1.600 1.900h8.400c1 0 1.600.6 1.600 1.600v11.700c0 1-.6 1.600-1.600 1.600H3.200c-1 0-1.600-.6-1.600-1.600z" fill="none" stroke="#1c1c1c" stroke-width="2.700"/><path d="M5.800 6.800h8.400v8.800H5.800z" fill="#8a8a8a" stroke="#2c2c2c" stroke-width="1.300"/><path d="M7.200 9.300h5.600M7.200 11.400h5.600M7.200 13.500h5.600" stroke="#222" stroke-width="1.300" fill="none"/></svg><a class="lnk" style="left:30px">Submission Template E</a></div>
<div class="c" style="left:223px;width:136px"><span class="tx">ST-000015</span></div>
<div class="c" style="left:359px;width:136px"><a class="lnk" style="left:10px">1</a></div>
<div class="c" style="left:495px;width:136px"><span class="bdg b-arch">Archived</span></div>
<div class="c" style="left:631px;width:150px"><span class="tx">Initial Submission</span></div>
<div class="c" style="left:781px;width:150px"><svg class="ic-bld" viewBox="0 0 22 22"><path d="M1.500 8 11 2l9.500 6v1.500h-19z" fill="#4a4a4a"/><path d="M3.500 10.500h2.600v7H3.500zM7.800 10.500h2.600v7H7.800zM12 10.500h2.600v5H12zM16.200 10.500h2.400v3.500h-2.400zM1.500 18.500h11v2.300h-11z" fill="#4a4a4a"/><circle cx="16.500" cy="15.300" r="2.300" fill="#0f3d5e"/><path d="M12.500 21.500c0-2.600 1.700-3.800 4-3.800s4 1.200 4 3.800z" fill="#0f3d5e"/></svg><span class="tx" style="left:31px">US - FDA</span></div>
<div class="c" style="left:931px;width:200px"><svg class="ic-bld" viewBox="0 0 22 22"><path d="M1.500 8 11 2l9.500 6v1.500h-19z" fill="#4a4a4a"/><path d="M3.500 10.500h2.600v7H3.500zM7.800 10.500h2.600v7H7.800zM12 10.500h2.600v3H12zM16.200 10.500h2.400v2h-2.400zM1.500 18.500h9v2.300h-9z" fill="#4a4a4a"/><path d="M11.500 14h6.200l3 3v4.700h-9.200z" fill="#0f3d5e"/><path d="M13.200 17.200h4.500M13.200 19.300h5.500" stroke="#8a9aa6" stroke-width="1"/></svg><span class="tx" style="left:31px">BLA</span></div>
<div class="c" style="left:1131px;width:137px"><span class="av">SR</span><a class="lnk" style="left:30px">Sarah Roger (sar…</a></div>
<div class="c r" style="left:1268px;width:135px"><span class="tx">Jun 26, 2025</span></div>
<div class="c r" style="left:1403px;width:152px"><span class="tx" style="right:10px">Jun 26, 2025</span></div>
<div class="c mn" style="left:1555px;width:44px"><svg class="chev" viewBox="0 0 20 12"><path d="M2.500 2.500 10 9.500l7.500-7" fill="none" stroke="#222" stroke-width="2.700" stroke-linecap="round" stroke-linejoin="round"/></svg></div>
</div>
<div class="row" style="top:575px">
<div class="c num">19</div>
<div class="c" style="left:23px;width:200px"><svg class="ic-tpl" viewBox="0 0 20 20"><path d="M1.600 5V3.200c0-1 .6-1.600 1.600-1.600h3.600l1.600 1.900h8.400c1 0 1.600.6 1.600 1.600v11.700c0 1-.6 1.600-1.600 1.600H3.200c-1 0-1.600-.6-1.600-1.600z" fill="none" stroke="#1c1c1c" stroke-width="2.700"/><path d="M5.800 6.800h8.400v8.800H5.800z" fill="#8a8a8a" stroke="#2c2c2c" stroke-width="1.300"/><path d="M7.200 9.300h5.600M7.200 11.400h5.600M7.200 13.500h5.600" stroke="#222" stroke-width="1.300" fill="none"/></svg><a class="lnk" style="left:30px">Submission Template F</a></div>
<div class="c" style="left:223px;width:136px"><span class="tx">ST-000016</span></div>
<div class="c" style="left:359px;width:136px"><a class="lnk" style="left:10px">1</a></div>
<div class="c" style="left:495px;width:136px"><span class="bdg b-arch">Archived</span></div>
<div class="c" style="left:631px;width:150px"><span class="tx">Initial Submission</span></div>
<div class="c" style="left:781px;width:150px"><svg class="ic-bld" viewBox="0 0 22 22"><path d="M1.500 8 11 2l9.500 6v1.500h-19z" fill="#4a4a4a"/><path d="M3.500 10.500h2.600v7H3.500zM7.800 10.500h2.600v7H7.800zM12 10.500h2.600v5H12zM16.200 10.500h2.400v3.500h-2.400zM1.500 18.500h11v2.300h-11z" fill="#4a4a4a"/><circle cx="16.500" cy="15.300" r="2.300" fill="#0f3d5e"/><path d="M12.500 21.500c0-2.600 1.700-3.800 4-3.800s4 1.200 4 3.800z" fill="#0f3d5e"/></svg><span class="tx" style="left:31px">US - FDA</span></div>
<div class="c" style="left:931px;width:200px"><svg class="ic-bld" viewBox="0 0 22 22"><path d="M1.500 8 11 2l9.500 6v1.500h-19z" fill="#4a4a4a"/><path d="M3.500 10.500h2.600v7H3.500zM7.800 10.500h2.600v7H7.800zM12 10.500h2.600v3H12zM16.200 10.500h2.400v2h-2.400zM1.500 18.500h9v2.300h-9z" fill="#4a4a4a"/><path d="M11.500 14h6.200l3 3v4.700h-9.200z" fill="#0f3d5e"/><path d="M13.200 17.200h4.500M13.200 19.300h5.500" stroke="#8a9aa6" stroke-width="1"/></svg><span class="tx" style="left:31px">BLA</span></div>
<div class="c" style="left:1131px;width:137px"><span class="av">SR</span><a class="lnk" style="left:30px">Sarah Roger (sar…</a></div>
<div class="c r" style="left:1268px;width:135px"><span class="tx">Jun 26, 2025</span></div>
<div class="c r" style="left:1403px;width:152px"><span class="tx" style="right:10px">Jun 26, 2025</span></div>
<div class="c mn" style="left:1555px;width:44px"><svg class="chev" viewBox="0 0 20 12"><path d="M2.500 2.500 10 9.500l7.500-7" fill="none" stroke="#222" stroke-width="2.700" stroke-linecap="round" stroke-linejoin="round"/></svg></div>
</div>
<div class="row alt" style="top:601px">
<div class="c num">20</div>
<div class="c" style="left:23px;width:200px"><svg class="ic-tpl" viewBox="0 0 20 20"><path d="M1.600 5V3.200c0-1 .6-1.600 1.600-1.600h3.600l1.600 1.900h8.400c1 0 1.600.6 1.600 1.600v11.700c0 1-.6 1.600-1.600 1.600H3.200c-1 0-1.600-.6-1.600-1.600z" fill="none" stroke="#1c1c1c" stroke-width="2.700"/><path d="M5.800 6.800h8.400v8.800H5.800z" fill="#8a8a8a" stroke="#2c2c2c" stroke-width="1.300"/><path d="M7.200 9.300h5.600M7.200 11.400h5.600M7.200 13.500h5.600" stroke="#222" stroke-width="1.300" fill="none"/></svg><a class="lnk" style="left:30px">Submission Template G</a></div>
<div class="c" style="left:223px;width:136px"><span class="tx">ST-000017</span></div>
<div class="c" style="left:359px;width:136px"><a class="lnk" style="left:10px">1</a></div>
<div class="c" style="left:495px;width:136px"><span class="bdg b-arch">Archived</span></div>
<div class="c" style="left:631px;width:150px"><span class="tx">Initial Submission</span></div>
<div class="c" style="left:781px;width:150px"><svg class="ic-bld" viewBox="0 0 22 22"><path d="M1.500 8 11 2l9.500 6v1.500h-19z" fill="#4a4a4a"/><path d="M3.500 10.500h2.600v7H3.500zM7.800 10.500h2.600v7H7.800zM12 10.500h2.600v5H12zM16.200 10.500h2.400v3.500h-2.400zM1.500 18.500h11v2.300h-11z" fill="#4a4a4a"/><circle cx="16.500" cy="15.300" r="2.300" fill="#0f3d5e"/><path d="M12.500 21.500c0-2.600 1.700-3.800 4-3.800s4 1.200 4 3.800z" fill="#0f3d5e"/></svg><span class="tx" style="left:31px">US - FDA</span></div>
<div class="c" style="left:931px;width:200px"><svg class="ic-bld" viewBox="0 0 22 22"><path d="M1.500 8 11 2l9.500 6v1.500h-19z" fill="#4a4a4a"/><path d="M3.500 10.500h2.600v7H3.500zM7.800 10.500h2.600v7H7.800zM12 10.500h2.600v3H12zM16.200 10.500h2.400v2h-2.400zM1.500 18.500h9v2.300h-9z" fill="#4a4a4a"/><path d="M11.500 14h6.200l3 3v4.700h-9.200z" fill="#0f3d5e"/><path d="M13.200 17.200h4.500M13.200 19.300h5.500" stroke="#8a9aa6" stroke-width="1"/></svg><span class="tx" style="left:31px">BLA</span></div>
<div class="c" style="left:1131px;width:137px"><span class="av">SR</span><a class="lnk" style="left:30px">Sarah Roger (sar…</a></div>
<div class="c r" style="left:1268px;width:135px"><span class="tx">Jun 26, 2025</span></div>
<div class="c r" style="left:1403px;width:152px"><span class="tx" style="right:10px">Jun 26, 2025</span></div>
<div class="c mn" style="left:1555px;width:44px"><svg class="chev" viewBox="0 0 20 12"><path d="M2.500 2.500 10 9.500l7.500-7" fill="none" stroke="#222" stroke-width="2.700" stroke-linecap="round" stroke-linejoin="round"/></svg></div>
</div>
<div class="row" style="top:627px">
<div class="c num">21</div>
<div class="c" style="left:23px;width:200px"><svg class="ic-tpl" viewBox="0 0 20 20"><path d="M1.600 5V3.200c0-1 .6-1.600 1.600-1.600h3.600l1.600 1.900h8.400c1 0 1.600.6 1.600 1.600v11.700c0 1-.6 1.600-1.600 1.600H3.200c-1 0-1.600-.6-1.600-1.600z" fill="none" stroke="#1c1c1c" stroke-width="2.700"/><path d="M5.800 6.800h8.400v8.800H5.800z" fill="#8a8a8a" stroke="#2c2c2c" stroke-width="1.300"/><path d="M7.200 9.300h5.600M7.200 11.400h5.600M7.200 13.500h5.600" stroke="#222" stroke-width="1.300" fill="none"/></svg><a class="lnk" style="left:30px">st template one</a></div>
<div class="c" style="left:223px;width:136px"><span class="tx">ST-000018</span></div>
<div class="c" style="left:359px;width:136px"><a class="lnk" style="left:10px">1</a></div>
<div class="c" style="left:495px;width:136px"><span class="bdg b-arch">Archived</span></div>
<div class="c" style="left:631px;width:150px"><span class="tx">Initial Submission</span></div>
<div class="c" style="left:781px;width:150px"><svg class="ic-bld" viewBox="0 0 22 22"><path d="M1.500 8 11 2l9.500 6v1.500h-19z" fill="#4a4a4a"/><path d="M3.500 10.500h2.600v7H3.500zM7.800 10.500h2.600v7H7.800zM12 10.500h2.600v5H12zM16.200 10.500h2.400v3.500h-2.400zM1.500 18.500h11v2.300h-11z" fill="#4a4a4a"/><circle cx="16.500" cy="15.300" r="2.300" fill="#0f3d5e"/><path d="M12.500 21.500c0-2.600 1.700-3.800 4-3.800s4 1.200 4 3.800z" fill="#0f3d5e"/></svg><span class="tx" style="left:31px">US - FDA</span></div>
<div class="c" style="left:931px;width:200px"><svg class="ic-bld" viewBox="0 0 22 22"><path d="M1.500 8 11 2l9.500 6v1.500h-19z" fill="#4a4a4a"/><path d="M3.500 10.500h2.600v7H3.500zM7.800 10.500h2.600v7H7.800zM12 10.500h2.600v3H12zM16.200 10.500h2.400v2h-2.400zM1.500 18.500h9v2.300h-9z" fill="#4a4a4a"/><path d="M11.500 14h6.200l3 3v4.700h-9.200z" fill="#0f3d5e"/><path d="M13.200 17.200h4.500M13.200 19.300h5.500" stroke="#8a9aa6" stroke-width="1"/></svg><span class="tx" style="left:31px">BLA</span></div>
<div class="c" style="left:1131px;width:137px"><span class="av">SR</span><a class="lnk" style="left:30px">Sarah Roger (sar…</a></div>
<div class="c r" style="left:1268px;width:135px"><span class="tx">Jun 26, 2025</span></div>
<div class="c r" style="left:1403px;width:152px"><span class="tx" style="right:10px">Jun 26, 2025</span></div>
<div class="c mn" style="left:1555px;width:44px"><svg class="chev" viewBox="0 0 20 12"><path d="M2.500 2.500 10 9.500l7.500-7" fill="none" stroke="#222" stroke-width="2.700" stroke-linecap="round" stroke-linejoin="round"/></svg></div>
</div>
<div class="row alt" style="top:653px">
<div class="c num">22</div>
<div class="c" style="left:23px;width:200px"><svg class="ic-tpl" viewBox="0 0 20 20"><path d="M1.600 5V3.200c0-1 .6-1.600 1.600-1.600h3.600l1.600 1.900h8.400c1 0 1.600.6 1.600 1.600v11.700c0 1-.6 1.600-1.600 1.600H3.200c-1 0-1.600-.6-1.600-1.600z" fill="none" stroke="#1c1c1c" stroke-width="2.700"/><path d="M5.800 6.800h8.400v8.800H5.800z" fill="#8a8a8a" stroke="#2c2c2c" stroke-width="1.300"/><path d="M7.200 9.300h5.600M7.200 11.400h5.600M7.200 13.500h5.600" stroke="#222" stroke-width="1.300" fill="none"/></svg><a class="lnk" style="left:30px">st template two</a></div>
<div class="c" style="left:223px;width:136px"><span class="tx">ST-000019</span></div>
<div class="c" style="left:359px;width:136px"><a class="lnk" style="left:10px">1</a></div>
<div class="c" style="left:495px;width:136px"><span class="bdg b-arch">Archived</span></div>
<div class="c" style="left:631px;width:150px"><span class="tx">Initial Submission</span></div>
<div class="c" style="left:781px;width:150px"><svg class="ic-bld" viewBox="0 0 22 22"><path d="M1.500 8 11 2l9.500 6v1.500h-19z" fill="#4a4a4a"/><path d="M3.500 10.500h2.600v7H3.500zM7.800 10.500h2.600v7H7.800zM12 10.500h2.600v5H12zM16.200 10.500h2.400v3.500h-2.400zM1.500 18.500h11v2.300h-11z" fill="#4a4a4a"/><circle cx="16.500" cy="15.300" r="2.300" fill="#0f3d5e"/><path d="M12.500 21.500c0-2.600 1.700-3.800 4-3.800s4 1.200 4 3.800z" fill="#0f3d5e"/></svg><span class="tx" style="left:31px">US - FDA</span></div>
<div class="c" style="left:931px;width:200px"><svg class="ic-bld" viewBox="0 0 22 22"><path d="M1.500 8 11 2l9.500 6v1.500h-19z" fill="#4a4a4a"/><path d="M3.500 10.500h2.600v7H3.500zM7.800 10.500h2.600v7H7.800zM12 10.500h2.600v3H12zM16.200 10.500h2.400v2h-2.400zM1.500 18.500h9v2.300h-9z" fill="#4a4a4a"/><path d="M11.500 14h6.200l3 3v4.700h-9.200z" fill="#0f3d5e"/><path d="M13.200 17.200h4.500M13.200 19.300h5.500" stroke="#8a9aa6" stroke-width="1"/></svg><span class="tx" style="left:31px">BLA</span></div>
<div class="c" style="left:1131px;width:137px"><span class="av">SR</span><a class="lnk" style="left:30px">Sarah Roger (sar…</a></div>
<div class="c r" style="left:1268px;width:135px"><span class="tx">Jun 26, 2025</span></div>
<div class="c r" style="left:1403px;width:152px"><span class="tx" style="right:10px">Jun 26, 2025</span></div>
<div class="c mn" style="left:1555px;width:44px"><svg class="chev" viewBox="0 0 20 12"><path d="M2.500 2.500 10 9.500l7.500-7" fill="none" stroke="#222" stroke-width="2.700" stroke-linecap="round" stroke-linejoin="round"/></svg></div>
</div>
<div class="row" style="top:679px">
<div class="c num">23</div>
<div class="c" style="left:23px;width:200px"><svg class="ic-tpl" viewBox="0 0 20 20"><path d="M1.600 5V3.200c0-1 .6-1.600 1.600-1.600h3.600l1.600 1.900h8.400c1 0 1.600.6 1.600 1.600v11.700c0 1-.6 1.600-1.600 1.600H3.200c-1 0-1.600-.6-1.600-1.600z" fill="none" stroke="#1c1c1c" stroke-width="2.700"/><path d="M5.800 6.800h8.400v8.800H5.800z" fill="#8a8a8a" stroke="#2c2c2c" stroke-width="1.300"/><path d="M7.200 9.300h5.600M7.200 11.400h5.600M7.200 13.500h5.600" stroke="#222" stroke-width="1.300" fill="none"/></svg><a class="lnk" style="left:30px">Submission Template H</a></div>
<div class="c" style="left:223px;width:136px"><span class="tx">ST-000020</span></div>
<div class="c" style="left:359px;width:136px"><a class="lnk" style="left:10px">1</a></div>
<div class="c" style="left:495px;width:136px"><span class="bdg b-arch">Archived</span></div>
<div class="c" style="left:631px;width:150px"><span class="tx">Initial Submission</span></div>
<div class="c" style="left:781px;width:150px"><svg class="ic-bld" viewBox="0 0 22 22"><path d="M1.500 8 11 2l9.500 6v1.500h-19z" fill="#4a4a4a"/><path d="M3.500 10.500h2.600v7H3.500zM7.800 10.500h2.600v7H7.800zM12 10.500h2.600v5H12zM16.200 10.500h2.400v3.500h-2.400zM1.500 18.500h11v2.300h-11z" fill="#4a4a4a"/><circle cx="16.500" cy="15.300" r="2.300" fill="#0f3d5e"/><path d="M12.500 21.500c0-2.600 1.700-3.800 4-3.800s4 1.200 4 3.800z" fill="#0f3d5e"/></svg><span class="tx" style="left:31px">US - FDA</span></div>
<div class="c" style="left:931px;width:200px"><svg class="ic-bld" viewBox="0 0 22 22"><path d="M1.500 8 11 2l9.500 6v1.500h-19z" fill="#4a4a4a"/><path d="M3.500 10.500h2.600v7H3.500zM7.800 10.500h2.600v7H7.800zM12 10.500h2.600v3H12zM16.200 10.500h2.400v2h-2.400zM1.500 18.500h9v2.300h-9z" fill="#4a4a4a"/><path d="M11.500 14h6.200l3 3v4.700h-9.200z" fill="#0f3d5e"/><path d="M13.200 17.200h4.500M13.200 19.300h5.500" stroke="#8a9aa6" stroke-width="1"/></svg><span class="tx" style="left:31px">BLA</span></div>
<div class="c" style="left:1131px;width:137px"><span class="av">SR</span><a class="lnk" style="left:30px">Sarah Roger (sar…</a></div>
<div class="c r" style="left:1268px;width:135px"><span class="tx">Jun 26, 2025</span></div>
<div class="c r" style="left:1403px;width:152px"><span class="tx" style="right:10px">Jun 26, 2025</span></div>
<div class="c mn" style="left:1555px;width:44px"><svg class="chev" viewBox="0 0 20 12"><path d="M2.500 2.500 10 9.500l7.500-7" fill="none" stroke="#222" stroke-width="2.700" stroke-linecap="round" stroke-linejoin="round"/></svg></div>
</div>
</div>
</div>
<div id="dlg">
 <div class="dt">Revisions - ST-000010, 4</div>
 <svg viewBox="0 0 12 12" style="left:1205px;top:8px;width:11px;height:11px"><path d="M1.500 1.500l9 9M10.500 1.500l-9 9" stroke="#3d3d3d" stroke-width="1.800"/></svg>
 <div class="dh"></div>
 <div class="gh">
  <div style="left:0;width:24px"></div>
  <div style="left:24px;width:226px">Title</div>
  <div style="left:250px;width:226px">Name</div>
  <div style="left:476px;width:226px">Revision</div>
  <div style="left:702px;width:227px">Maturity</div>
  <div style="left:929px;width:228px">Owner</div>
  <div style="left:1157px;width:44px;border-right:0">Menu</div>
 </div>
 <div class="gn"></div>
 <div class="gv"></div>
 <div class="dr" style="top:63px">
<div style="position:absolute;left:24px;top:0;width:1177px;height:26px;background:#d5e8f2"></div>
<span class="cb" style="left:5px;top:6px;background:#368ec4"><svg viewBox="0 0 16 16"><path d="M3.200 8.300l3.200 3.200 6.200-6.600" fill="none" stroke="#fff" stroke-width="2.400"/></svg></span>
<div class="d" style="left:32px">Variation Submission Template</div>
<div class="d" style="left:258px">ST-000010</div>
<div class="d" style="left:484px">4</div>
<div class="d" style="left:702px;width:200px"><span class="bdg b-rel">Released</span></div>
<div class="d" style="left:929px;width:220px"><span class="av">SR</span><a style="position:absolute;left:31px">Sarah Roger (sarah.roger)</a></div>
<div style="position:absolute;left:1157px;top:0;width:44px;height:26px;box-sizing:border-box;border:1.500px solid #4f97c8;background:#d5e8f2"></div><svg class="chev" viewBox="0 0 20 12" style="left:1172px"><path d="M2.500 2.500 10 9.500l7.500-7" fill="none" stroke="#2f7fb3" stroke-width="2.600" stroke-linecap="round" stroke-linejoin="round"/></svg>
</div>
<div class="dr" style="top:89px">
<div style="position:absolute;left:24px;top:0;width:1177px;height:26px;background:#f4f5f6"></div>
<div class="d" style="left:0;width:23px;text-align:center;color:#3d3d3d">2</div>
<div class="d" style="left:32px">Variation Submission Template</div>
<div class="d" style="left:258px">ST-000010</div>
<div class="d" style="left:484px">3</div>
<div class="d" style="left:702px;width:200px"><span class="bdg b-arch">Archived</span></div>
<div class="d" style="left:929px;width:220px"><span class="av">SR</span><a style="position:absolute;left:31px">Sarah Roger (sarah.roger)</a></div>
<svg class="chev" viewBox="0 0 20 12" style="left:1171px"><path d="M2.500 2.500 10 9.500l7.500-7" fill="none" stroke="#4a4a4a" stroke-width="2.600" stroke-linecap="round" stroke-linejoin="round"/></svg>
</div>
<div class="dr" style="top:115px">
<div style="position:absolute;left:24px;top:0;width:1177px;height:26px;background:#ffffff"></div>
<div class="d" style="left:0;width:23px;text-align:center;color:#3d3d3d">3</div>
<div class="d" style="left:32px">Variation Submission Template</div>
<div class="d" style="left:258px">ST-000010</div>
<div class="d" style="left:484px">2</div>
<div class="d" style="left:702px;width:200px"><span class="bdg b-arch">Archived</span></div>
<div class="d" style="left:929px;width:220px"><span class="av">SR</span><a style="position:absolute;left:31px">Sarah Roger (sarah.roger)</a></div>
<svg class="chev" viewBox="0 0 20 12" style="left:1171px"><path d="M2.500 2.500 10 9.500l7.500-7" fill="none" stroke="#4a4a4a" stroke-width="2.600" stroke-linecap="round" stroke-linejoin="round"/></svg>
</div>
<div class="dr" style="top:141px">
<div style="position:absolute;left:24px;top:0;width:1177px;height:26px;background:#f4f5f6"></div>
<div class="d" style="left:0;width:23px;text-align:center;color:#3d3d3d">4</div>
<div class="d" style="left:32px">Variation Submission Template</div>
<div class="d" style="left:258px">ST-000010</div>
<div class="d" style="left:484px">1</div>
<div class="d" style="left:702px;width:200px"><span class="bdg b-arch">Archived</span></div>
<div class="d" style="left:929px;width:220px"><span class="av">SR</span><a style="position:absolute;left:31px">Sarah Roger (sarah.roger)</a></div>
<svg class="chev" viewBox="0 0 20 12" style="left:1171px"><path d="M2.500 2.500 10 9.500l7.500-7" fill="none" stroke="#4a4a4a" stroke-width="2.600" stroke-linecap="round" stroke-linejoin="round"/></svg>
</div>
 <div class="df"></div>
 <div class="close">Close</div>
 <svg viewBox="0 0 10 10" style="left:1210px;top:340px;width:10px;height:10px"><path d="M8.500 1v7.500H1" fill="none" stroke="#9a9a9a" stroke-width="1.200"/></svg>
</div>
<div id="ctx">
 <div style="top:0"><svg viewBox="0 0 18 18" style="left:13px;top:3px;width:19px;height:19px"><path d="M2.500 2c5.500-.3 9 2.300 9.300 7.300h3.700L9.800 16.500 4.300 9.300h3.600C7.700 5.800 6 3.300 2.500 2z" fill="#3f3f3f"/></svg><span>Open</span></div>
 <div style="top:25px;height:27px;background:#f1f1f1"><svg viewBox="0 0 18 18" style="left:12px;top:4px;width:19px;height:19px"><path d="M3.500 2v13M3.500 8.500h8.500V2" fill="none" stroke="#5c5c5c" stroke-width="1.800"/><circle cx="3.500" cy="2.600" r="2" fill="#5c5c5c"/><circle cx="3.500" cy="15" r="2" fill="#5c5c5c"/><circle cx="12" cy="2.600" r="2" fill="#5c5c5c"/><path d="M13 10.500v6.500M9.800 13.700h6.500" stroke="#5c5c5c" stroke-width="1.900"/></svg><span>New Revision</span></div>
</div>

</div>
</body></html>
